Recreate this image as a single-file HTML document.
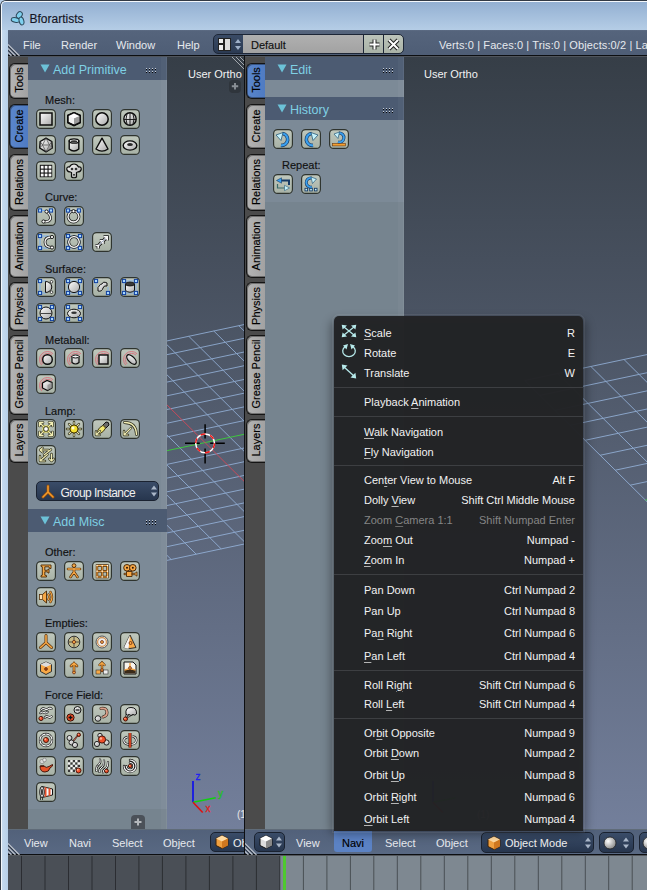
<!DOCTYPE html><html><head><meta charset="utf-8"><style>
*{margin:0;padding:0;box-sizing:border-box}
html,body{width:647px;height:890px;overflow:hidden;background:#b9d1ea;font-family:"Liberation Sans", sans-serif;position:relative}
.t{position:absolute;white-space:pre;line-height:1;font-family:"Liberation Sans", sans-serif}
.d{-webkit-text-stroke-width:0.15px}
div{position:absolute}
.ib{position:absolute;width:20px;height:20px;border-radius:4px;background:#b7c0b6;border:1px solid #30352f;box-shadow:0 1px 0 rgba(255,255,255,0.08)}
.ib svg{position:absolute;left:0;top:0}
.u{text-decoration:underline;text-underline-offset:1.8px;text-decoration-thickness:1px;text-decoration-color:color-mix(in srgb,currentColor 70%,transparent)}
</style></head><body><div style="left:0px;top:0px;width:647px;height:890px;background:#bcd4ec;border-top:1px solid #323a45;border-left:1px solid #323a45;border-top-left-radius:6px;"></div>
<div style="left:1px;top:1px;width:646px;height:889px;border-top:1px solid #f4f8fc;border-left:1px solid #f4f8fc;border-top-left-radius:5px;"></div>
<div style="left:2px;top:2px;width:645px;height:28px;background:linear-gradient(#93b0d2,#b5cde6);border-top-left-radius:4px;"></div>
<div style="left:2px;top:30px;width:6px;height:860px;background:linear-gradient(90deg,#c6daee,#b7cfe8);"></div>
<svg style="position:absolute;left:10px;top:10px;" width="16" height="16" viewBox="0 0 16 16"><g fill="#7fd0ee" stroke="#2a4658" stroke-width="1"><ellipse cx="9.3" cy="5" rx="2.6" ry="3.6" transform="rotate(35 9.3 5)"/><ellipse cx="5.5" cy="10" rx="4.3" ry="2.3" transform="rotate(10 5.5 10)"/><ellipse cx="11.5" cy="11" rx="2.3" ry="4" transform="rotate(-15 11.5 11)"/></g></svg>
<div class="t d" style="left:29.5px;top:12.54px;font-size:12px;color:#151525;">Bforartists</div>
<div style="left:8px;top:30px;width:639px;height:26px;background:linear-gradient(#5d6c84 0px,#55647c 1.5px,#4e5d75 100%);"></div>
<div style="left:8px;top:55px;width:639px;height:1px;background:#0c0e11;"></div>
<div style="left:8px;top:56px;width:639px;height:1px;background:#50555c;"></div>
<svg style="position:absolute;left:8px;top:43px;" width="13" height="13" viewBox="0 0 13 13"><path d="M0 1.5 L11.5 13 M0 5.5 L7.5 13 M0 9.5 L3.5 13" stroke="#d0d4da" stroke-width="1.2" opacity="0.85"/><path d="M0 3.2 L9.8 13 M0 7.2 L5.8 13 M0 11.2 L1.8 13" stroke="#1a1e24" stroke-width="0.9" opacity="0.8"/></svg>
<div class="t" style="left:23px;top:40.19px;font-size:11px;color:#e6e9ee;">File</div>
<div class="t" style="left:61px;top:40.19px;font-size:11px;color:#e6e9ee;">Render</div>
<div class="t" style="left:116px;top:40.19px;font-size:11px;color:#e6e9ee;">Window</div>
<div class="t" style="left:177px;top:40.19px;font-size:11px;color:#e6e9ee;">Help</div>
<div style="left:213px;top:34px;width:31px;height:20px;background:linear-gradient(#3a4b66,#2b3a52);border:1px solid #1d2636;border-radius:5px 0 0 5px;"></div>
<svg style="position:absolute;left:218px;top:38px;" width="13" height="13" viewBox="0 0 13 13"><rect x="0.5" y="0.5" width="5" height="5" fill="#eee" stroke="#222" stroke-width="1"/><rect x="0.5" y="6.5" width="5" height="6" fill="#eee" stroke="#222" stroke-width="1"/><rect x="6.5" y="0.5" width="6" height="12" fill="#ddd" stroke="#222" stroke-width="1"/></svg>
<svg style="position:absolute;left:234px;top:38px;" width="8" height="13" viewBox="0 0 8 13"><path d="M1 5 L4 1 L7 5Z M1 8 L4 12 L7 8Z" fill="#9fb0c8"/></svg>
<div style="left:243px;top:34px;width:121px;height:20px;background:linear-gradient(#b0b0b0,#a2a2a2);border:1px solid #1d2636;border-left:none;"></div>
<div class="t d" style="left:251px;top:39.89px;font-size:11px;color:#111;">Default</div>
<div style="left:363px;top:34px;width:21px;height:20px;background:linear-gradient(#bcc4ba,#a9b2a7);border:1px solid #1d2636;"></div>
<div style="left:383px;top:34px;width:21px;height:20px;background:linear-gradient(#bcc4ba,#a9b2a7);border:1px solid #1d2636;border-radius:0 5px 5px 0;"></div>
<svg style="position:absolute;left:368px;top:38px;" width="13" height="13" viewBox="0 0 13 13"><path d="M6.5 1.5 V11.5 M1.5 6.5 H11.5" stroke="#222" stroke-width="4"/><path d="M6.5 1.5 V11.5 M1.5 6.5 H11.5" stroke="#fff" stroke-width="2"/></svg>
<svg style="position:absolute;left:387px;top:38px;" width="13" height="13" viewBox="0 0 13 13"><path d="M2 2 L11 11 M11 2 L2 11" stroke="#222" stroke-width="4"/><path d="M2 2 L11 11 M11 2 L2 11" stroke="#fff" stroke-width="2"/></svg>
<div class="t" style="left:439px;top:40.19px;font-size:11px;color:#e6e9ee;letter-spacing:0.11px">Verts:0 | Faces:0 | Tris:0 | Objects:0/2 | Layers</div>
<div style="left:8px;top:57px;width:20px;height:772px;background:#4b4b4b;"></div>
<div style="left:245px;top:57px;width:20px;height:772px;background:#4b4b4b;"></div>
<div style="left:244px;top:56px;width:1px;height:773px;background:#0d0f12;"></div>
<div style="left:9px;top:63px;width:19px;height:36px;background:linear-gradient(90deg,#b4b4b4,#a2a2a2);border:1px solid #141414;border-right:none;border-radius:6px 0 0 6px;box-shadow:inset 1px 1px 0 rgba(0,0,0,0.35), inset 0 -1px 0 rgba(0,0,0,0.35);"></div>
<div class="t" style="left:10px;top:63px;width:18px;height:36px;"><div class="t d" style="left:50%;top:calc(50% - 0.8px);transform:translate(-50%,-50%) rotate(-90deg);font-size:11px;color:#000;">Tools</div></div>
<div style="left:9px;top:104px;width:19px;height:45px;background:linear-gradient(90deg,#5a86cc,#4f7bc2);border:1px solid #141414;border-right:none;border-radius:6px 0 0 6px;box-shadow:inset 1px 1px 0 rgba(0,0,0,0.35), inset 0 -1px 0 rgba(0,0,0,0.35);"></div>
<div class="t" style="left:10px;top:104px;width:18px;height:45px;"><div class="t d" style="left:50%;top:calc(50% - 0.8px);transform:translate(-50%,-50%) rotate(-90deg);font-size:11px;color:#000;">Create</div></div>
<div style="left:9px;top:154px;width:19px;height:57px;background:linear-gradient(90deg,#b4b4b4,#a2a2a2);border:1px solid #141414;border-right:none;border-radius:6px 0 0 6px;box-shadow:inset 1px 1px 0 rgba(0,0,0,0.35), inset 0 -1px 0 rgba(0,0,0,0.35);"></div>
<div class="t" style="left:10px;top:154px;width:18px;height:57px;"><div class="t d" style="left:50%;top:calc(50% - 0.8px);transform:translate(-50%,-50%) rotate(-90deg);font-size:11px;color:#000;">Relations</div></div>
<div style="left:9px;top:215px;width:19px;height:63px;background:linear-gradient(90deg,#b4b4b4,#a2a2a2);border:1px solid #141414;border-right:none;border-radius:6px 0 0 6px;box-shadow:inset 1px 1px 0 rgba(0,0,0,0.35), inset 0 -1px 0 rgba(0,0,0,0.35);"></div>
<div class="t" style="left:10px;top:215px;width:18px;height:63px;"><div class="t d" style="left:50%;top:calc(50% - 0.8px);transform:translate(-50%,-50%) rotate(-90deg);font-size:11px;color:#000;">Animation</div></div>
<div style="left:9px;top:282px;width:19px;height:49px;background:linear-gradient(90deg,#b4b4b4,#a2a2a2);border:1px solid #141414;border-right:none;border-radius:6px 0 0 6px;box-shadow:inset 1px 1px 0 rgba(0,0,0,0.35), inset 0 -1px 0 rgba(0,0,0,0.35);"></div>
<div class="t" style="left:10px;top:282px;width:18px;height:49px;"><div class="t d" style="left:50%;top:calc(50% - 0.8px);transform:translate(-50%,-50%) rotate(-90deg);font-size:11px;color:#000;">Physics</div></div>
<div style="left:9px;top:335px;width:19px;height:80px;background:linear-gradient(90deg,#b4b4b4,#a2a2a2);border:1px solid #141414;border-right:none;border-radius:6px 0 0 6px;box-shadow:inset 1px 1px 0 rgba(0,0,0,0.35), inset 0 -1px 0 rgba(0,0,0,0.35);"></div>
<div class="t" style="left:10px;top:335px;width:18px;height:80px;"><div class="t d" style="left:50%;top:calc(50% - 0.8px);transform:translate(-50%,-50%) rotate(-90deg);font-size:11px;color:#000;">Grease Pencil</div></div>
<div style="left:9px;top:419px;width:19px;height:44px;background:linear-gradient(90deg,#b4b4b4,#a2a2a2);border:1px solid #141414;border-right:none;border-radius:6px 0 0 6px;box-shadow:inset 1px 1px 0 rgba(0,0,0,0.35), inset 0 -1px 0 rgba(0,0,0,0.35);"></div>
<div class="t" style="left:10px;top:419px;width:18px;height:44px;"><div class="t d" style="left:50%;top:calc(50% - 0.8px);transform:translate(-50%,-50%) rotate(-90deg);font-size:11px;color:#000;">Layers</div></div>
<div style="left:246px;top:63px;width:19px;height:36px;background:linear-gradient(90deg,#5a86cc,#4f7bc2);border:1px solid #141414;border-right:none;border-radius:6px 0 0 6px;box-shadow:inset 1px 1px 0 rgba(0,0,0,0.35), inset 0 -1px 0 rgba(0,0,0,0.35);"></div>
<div class="t" style="left:247px;top:63px;width:18px;height:36px;"><div class="t d" style="left:50%;top:calc(50% - 0.8px);transform:translate(-50%,-50%) rotate(-90deg);font-size:11px;color:#000;">Tools</div></div>
<div style="left:246px;top:104px;width:19px;height:45px;background:linear-gradient(90deg,#b4b4b4,#a2a2a2);border:1px solid #141414;border-right:none;border-radius:6px 0 0 6px;box-shadow:inset 1px 1px 0 rgba(0,0,0,0.35), inset 0 -1px 0 rgba(0,0,0,0.35);"></div>
<div class="t" style="left:247px;top:104px;width:18px;height:45px;"><div class="t d" style="left:50%;top:calc(50% - 0.8px);transform:translate(-50%,-50%) rotate(-90deg);font-size:11px;color:#000;">Create</div></div>
<div style="left:246px;top:154px;width:19px;height:57px;background:linear-gradient(90deg,#b4b4b4,#a2a2a2);border:1px solid #141414;border-right:none;border-radius:6px 0 0 6px;box-shadow:inset 1px 1px 0 rgba(0,0,0,0.35), inset 0 -1px 0 rgba(0,0,0,0.35);"></div>
<div class="t" style="left:247px;top:154px;width:18px;height:57px;"><div class="t d" style="left:50%;top:calc(50% - 0.8px);transform:translate(-50%,-50%) rotate(-90deg);font-size:11px;color:#000;">Relations</div></div>
<div style="left:246px;top:215px;width:19px;height:63px;background:linear-gradient(90deg,#b4b4b4,#a2a2a2);border:1px solid #141414;border-right:none;border-radius:6px 0 0 6px;box-shadow:inset 1px 1px 0 rgba(0,0,0,0.35), inset 0 -1px 0 rgba(0,0,0,0.35);"></div>
<div class="t" style="left:247px;top:215px;width:18px;height:63px;"><div class="t d" style="left:50%;top:calc(50% - 0.8px);transform:translate(-50%,-50%) rotate(-90deg);font-size:11px;color:#000;">Animation</div></div>
<div style="left:246px;top:282px;width:19px;height:49px;background:linear-gradient(90deg,#b4b4b4,#a2a2a2);border:1px solid #141414;border-right:none;border-radius:6px 0 0 6px;box-shadow:inset 1px 1px 0 rgba(0,0,0,0.35), inset 0 -1px 0 rgba(0,0,0,0.35);"></div>
<div class="t" style="left:247px;top:282px;width:18px;height:49px;"><div class="t d" style="left:50%;top:calc(50% - 0.8px);transform:translate(-50%,-50%) rotate(-90deg);font-size:11px;color:#000;">Physics</div></div>
<div style="left:246px;top:335px;width:19px;height:80px;background:linear-gradient(90deg,#b4b4b4,#a2a2a2);border:1px solid #141414;border-right:none;border-radius:6px 0 0 6px;box-shadow:inset 1px 1px 0 rgba(0,0,0,0.35), inset 0 -1px 0 rgba(0,0,0,0.35);"></div>
<div class="t" style="left:247px;top:335px;width:18px;height:80px;"><div class="t d" style="left:50%;top:calc(50% - 0.8px);transform:translate(-50%,-50%) rotate(-90deg);font-size:11px;color:#000;">Grease Pencil</div></div>
<div style="left:246px;top:419px;width:19px;height:44px;background:linear-gradient(90deg,#b4b4b4,#a2a2a2);border:1px solid #141414;border-right:none;border-radius:6px 0 0 6px;box-shadow:inset 1px 1px 0 rgba(0,0,0,0.35), inset 0 -1px 0 rgba(0,0,0,0.35);"></div>
<div class="t" style="left:247px;top:419px;width:18px;height:44px;"><div class="t d" style="left:50%;top:calc(50% - 0.8px);transform:translate(-50%,-50%) rotate(-90deg);font-size:11px;color:#000;">Layers</div></div>
<div style="left:28px;top:57px;width:139px;height:772px;background:#76848f;"></div>
<div style="left:265px;top:57px;width:139px;height:772px;background:#76848f;"></div>
<div style="left:28px;top:57px;width:139px;height:23px;background:#4c5b72;"></div>
<svg style="position:absolute;left:40px;top:64px;" width="10" height="9" viewBox="0 0 10 9"><path d="M0.5 0.5 H9.5 L5 8.5Z" fill="#6cc2d8"/></svg>
<div class="t" style="left:53px;top:64.12px;font-size:12.5px;color:#7fd0e4;">Add Primitive</div>
<svg style="position:absolute;left:146px;top:68px;" width="11" height="5" viewBox="0 0 11 5"><rect x="0" y="0" width="1" height="1" fill="#c4ccd8"/><rect x="0" y="1" width="1" height="1" fill="#050608"/><rect x="0" y="3" width="1" height="1" fill="#c4ccd8"/><rect x="0" y="4" width="1" height="1" fill="#050608"/><rect x="3" y="0" width="1" height="1" fill="#c4ccd8"/><rect x="3" y="1" width="1" height="1" fill="#050608"/><rect x="3" y="3" width="1" height="1" fill="#c4ccd8"/><rect x="3" y="4" width="1" height="1" fill="#050608"/><rect x="6" y="0" width="1" height="1" fill="#c4ccd8"/><rect x="6" y="1" width="1" height="1" fill="#050608"/><rect x="6" y="3" width="1" height="1" fill="#c4ccd8"/><rect x="6" y="4" width="1" height="1" fill="#050608"/><rect x="9" y="0" width="1" height="1" fill="#c4ccd8"/><rect x="9" y="1" width="1" height="1" fill="#050608"/><rect x="9" y="3" width="1" height="1" fill="#c4ccd8"/><rect x="9" y="4" width="1" height="1" fill="#050608"/></svg>
<div style="left:28px;top:80px;width:139px;height:729px;background:#7c8a97;"></div>
<div style="left:265px;top:57px;width:139px;height:23px;background:#4c5b72;"></div>
<svg style="position:absolute;left:277px;top:64px;" width="10" height="9" viewBox="0 0 10 9"><path d="M0.5 0.5 H9.5 L5 8.5Z" fill="#6cc2d8"/></svg>
<div class="t" style="left:290px;top:64.12px;font-size:12.5px;color:#7fd0e4;">Edit</div>
<svg style="position:absolute;left:383px;top:68px;" width="11" height="5" viewBox="0 0 11 5"><rect x="0" y="0" width="1" height="1" fill="#c4ccd8"/><rect x="0" y="1" width="1" height="1" fill="#050608"/><rect x="0" y="3" width="1" height="1" fill="#c4ccd8"/><rect x="0" y="4" width="1" height="1" fill="#050608"/><rect x="3" y="0" width="1" height="1" fill="#c4ccd8"/><rect x="3" y="1" width="1" height="1" fill="#050608"/><rect x="3" y="3" width="1" height="1" fill="#c4ccd8"/><rect x="3" y="4" width="1" height="1" fill="#050608"/><rect x="6" y="0" width="1" height="1" fill="#c4ccd8"/><rect x="6" y="1" width="1" height="1" fill="#050608"/><rect x="6" y="3" width="1" height="1" fill="#c4ccd8"/><rect x="6" y="4" width="1" height="1" fill="#050608"/><rect x="9" y="0" width="1" height="1" fill="#c4ccd8"/><rect x="9" y="1" width="1" height="1" fill="#050608"/><rect x="9" y="3" width="1" height="1" fill="#c4ccd8"/><rect x="9" y="4" width="1" height="1" fill="#050608"/></svg>
<div style="left:265px;top:80px;width:139px;height:17px;background:#7c8a97;"></div>
<div style="left:265px;top:97px;width:139px;height:23px;background:#4c5b72;"></div>
<svg style="position:absolute;left:277px;top:104px;" width="10" height="9" viewBox="0 0 10 9"><path d="M0.5 0.5 H9.5 L5 8.5Z" fill="#6cc2d8"/></svg>
<div class="t" style="left:290px;top:104.12px;font-size:12.5px;color:#7fd0e4;">History</div>
<svg style="position:absolute;left:383px;top:108px;" width="11" height="5" viewBox="0 0 11 5"><rect x="0" y="0" width="1" height="1" fill="#c4ccd8"/><rect x="0" y="1" width="1" height="1" fill="#050608"/><rect x="0" y="3" width="1" height="1" fill="#c4ccd8"/><rect x="0" y="4" width="1" height="1" fill="#050608"/><rect x="3" y="0" width="1" height="1" fill="#c4ccd8"/><rect x="3" y="1" width="1" height="1" fill="#050608"/><rect x="3" y="3" width="1" height="1" fill="#c4ccd8"/><rect x="3" y="4" width="1" height="1" fill="#050608"/><rect x="6" y="0" width="1" height="1" fill="#c4ccd8"/><rect x="6" y="1" width="1" height="1" fill="#050608"/><rect x="6" y="3" width="1" height="1" fill="#c4ccd8"/><rect x="6" y="4" width="1" height="1" fill="#050608"/><rect x="9" y="0" width="1" height="1" fill="#c4ccd8"/><rect x="9" y="1" width="1" height="1" fill="#050608"/><rect x="9" y="3" width="1" height="1" fill="#c4ccd8"/><rect x="9" y="4" width="1" height="1" fill="#050608"/></svg>
<div style="left:265px;top:120px;width:139px;height:82px;background:#7c8a97;"></div>
<div style="left:161px;top:57px;width:6px;height:772px;background:rgba(255,255,255,0.03);"></div>
<div style="left:166px;top:57px;width:1px;height:772px;background:rgba(255,255,255,0.06);"></div>
<div style="left:398px;top:57px;width:6px;height:772px;background:rgba(255,255,255,0.03);"></div>
<div style="left:403px;top:57px;width:1px;height:772px;background:rgba(255,255,255,0.06);"></div>
<div style="left:167px;top:57px;width:77px;height:772px;background:linear-gradient(#363e47,#737f9b);"></div>
<div style="left:404px;top:57px;width:243px;height:772px;background:linear-gradient(#363e47,#737f9b);"></div>
<div class="t" style="left:188px;top:69.39px;font-size:11px;color:#f2f2f2;">User Ortho</div>
<div class="t" style="left:424px;top:69.39px;font-size:11px;color:#f2f2f2;">User Ortho</div>
<div style="left:8px;top:829px;width:639px;height:26px;background:linear-gradient(#5f6b78 0px,#5f6b78 1px,#52617a 1px,#596983 100%);"></div>
<div style="left:244px;top:829px;width:1px;height:26px;background:#0d0f12;"></div>
<div style="left:8px;top:854px;width:639px;height:1px;background:#0c0e11;"></div>
<div style="left:8px;top:855px;width:639px;height:1px;background:#54585d;"></div>
<svg style="position:absolute;left:8px;top:842px;" width="13" height="13" viewBox="0 0 13 13"><path d="M0 1.5 L11.5 13 M0 5.5 L7.5 13 M0 9.5 L3.5 13" stroke="#d0d4da" stroke-width="1.2" opacity="0.85"/><path d="M0 3.2 L9.8 13 M0 7.2 L5.8 13 M0 11.2 L1.8 13" stroke="#1a1e24" stroke-width="0.9" opacity="0.8"/></svg>
<svg style="position:absolute;left:245px;top:842px;" width="13" height="13" viewBox="0 0 13 13"><path d="M0 1.5 L11.5 13 M0 5.5 L7.5 13 M0 9.5 L3.5 13" stroke="#d0d4da" stroke-width="1.2" opacity="0.85"/><path d="M0 3.2 L9.8 13 M0 7.2 L5.8 13 M0 11.2 L1.8 13" stroke="#1a1e24" stroke-width="0.9" opacity="0.8"/></svg>
<div class="t" style="left:24px;top:837.99px;font-size:11px;color:#e6e9ee;">View</div>
<div class="t" style="left:69px;top:837.99px;font-size:11px;color:#e6e9ee;">Navi</div>
<div class="t" style="left:112px;top:837.99px;font-size:11px;color:#e6e9ee;">Select</div>
<div class="t" style="left:163px;top:837.99px;font-size:11px;color:#e6e9ee;">Object</div>
<div class="t" style="left:296px;top:837.99px;font-size:11px;color:#e6e9ee;">View</div>
<div class="t" style="left:385px;top:837.99px;font-size:11px;color:#e6e9ee;">Select</div>
<div class="t" style="left:436px;top:837.99px;font-size:11px;color:#e6e9ee;">Object</div>
<div style="left:334px;top:831px;width:38px;height:21px;background:#5b82c4;border-radius:0 0 3px 3px;"></div>
<div class="t d" style="left:342px;top:837.99px;font-size:11px;color:#000;">Navi</div>
<div style="left:8px;top:856px;width:639px;height:34px;background:#7e8891;"></div>
<div style="left:8px;top:856px;width:272px;height:34px;background:#4a4f56;"></div>
<svg style="position:absolute;left:8px;top:856px;" width="639" height="34" viewBox="0 0 639 34"><rect x="13.0" y="0" width="1" height="34" fill="#000" opacity="0.42"/><rect x="36.5" y="0" width="1" height="34" fill="#000" opacity="0.42"/><rect x="60.0" y="0" width="1" height="34" fill="#000" opacity="0.42"/><rect x="83.5" y="0" width="1" height="34" fill="#000" opacity="0.42"/><rect x="107.0" y="0" width="1" height="34" fill="#000" opacity="0.42"/><rect x="130.4" y="0" width="1" height="34" fill="#000" opacity="0.42"/><rect x="153.9" y="0" width="1" height="34" fill="#000" opacity="0.42"/><rect x="177.4" y="0" width="1" height="34" fill="#000" opacity="0.42"/><rect x="200.9" y="0" width="1" height="34" fill="#000" opacity="0.42"/><rect x="224.4" y="0" width="1" height="34" fill="#000" opacity="0.42"/><rect x="247.9" y="0" width="1" height="34" fill="#000" opacity="0.42"/><rect x="271.4" y="0" width="1" height="34" fill="#000" opacity="0.42"/><rect x="294.9" y="0" width="1" height="34" fill="#000" opacity="0.42"/><rect x="318.4" y="0" width="1" height="34" fill="#000" opacity="0.42"/><rect x="341.9" y="0" width="1" height="34" fill="#000" opacity="0.42"/><rect x="365.3" y="0" width="1" height="34" fill="#000" opacity="0.42"/><rect x="388.8" y="0" width="1" height="34" fill="#000" opacity="0.42"/><rect x="412.3" y="0" width="1" height="34" fill="#000" opacity="0.42"/><rect x="435.8" y="0" width="1" height="34" fill="#000" opacity="0.42"/><rect x="459.3" y="0" width="1" height="34" fill="#000" opacity="0.42"/><rect x="482.8" y="0" width="1" height="34" fill="#000" opacity="0.42"/><rect x="506.3" y="0" width="1" height="34" fill="#000" opacity="0.42"/><rect x="529.8" y="0" width="1" height="34" fill="#000" opacity="0.42"/><rect x="553.3" y="0" width="1" height="34" fill="#000" opacity="0.42"/><rect x="576.8" y="0" width="1" height="34" fill="#000" opacity="0.42"/><rect x="600.2" y="0" width="1" height="34" fill="#000" opacity="0.42"/><rect x="623.7" y="0" width="1" height="34" fill="#000" opacity="0.42"/><rect x="647.2" y="0" width="1" height="34" fill="#000" opacity="0.42"/></svg>
<div style="left:283px;top:856px;width:3px;height:34px;background:#4ec92f;"></div>
<svg width="0" height="0" style="position:absolute"><defs><linearGradient id="gw" x1="0" y1="0" x2="1" y2="1"><stop offset="0" stop-color="#ffffff"/><stop offset="1" stop-color="#a8a8a8"/></linearGradient><linearGradient id="bg" x1="0" y1="0" x2="0" y2="1"><stop offset="0" stop-color="#c0c8bd"/><stop offset="1" stop-color="#a8b2a6"/></linearGradient></defs></svg>
<div class="t d" style="left:45px;top:95.39px;font-size:11px;color:#111;">Mesh:</div>
<svg style="position:absolute;left:36px;top:109px" width="20" height="20" viewBox="0 0 20 20"><rect x="0.6" y="0.6" width="18.8" height="18.8" rx="4" fill="url(#bg)" stroke="#2e332e" stroke-width="1.15"/><rect x="4" y="4" width="12" height="12" fill="url(#gw)" stroke="#0c0c0c" stroke-width="1.5"/></svg>
<svg style="position:absolute;left:64px;top:109px" width="20" height="20" viewBox="0 0 20 20"><rect x="0.6" y="0.6" width="18.8" height="18.8" rx="4" fill="url(#bg)" stroke="#2e332e" stroke-width="1.15"/><path d="M3.8 6.5 L10 3.6 L16.2 6.5 V13.5 L10 16.5 L3.8 13.5Z" fill="#f2f2f2" stroke="#0c0c0c" stroke-width="1.4" stroke-linejoin="round"/><path d="M10 9.2 L16.2 6.5 V13.5 L10 16.5Z" fill="#9a9a9a"/><path d="M3.8 6.5 L10 9.2 L16.2 6.5 L10 3.6Z" fill="#ffffff"/><path d="M3.8 6.5 L10 3.6 L16.2 6.5 V13.5 L10 16.5 L3.8 13.5Z" fill="none" stroke="#0c0c0c" stroke-width="1.4" stroke-linejoin="round"/></svg>
<svg style="position:absolute;left:92px;top:109px" width="20" height="20" viewBox="0 0 20 20"><rect x="0.6" y="0.6" width="18.8" height="18.8" rx="4" fill="url(#bg)" stroke="#2e332e" stroke-width="1.15"/><circle cx="10" cy="10" r="6.2" fill="url(#gw)" stroke="#0c0c0c" stroke-width="1.5"/></svg>
<svg style="position:absolute;left:120px;top:109px" width="20" height="20" viewBox="0 0 20 20"><rect x="0.6" y="0.6" width="18.8" height="18.8" rx="4" fill="url(#bg)" stroke="#2e332e" stroke-width="1.15"/><circle cx="10" cy="10" r="6.2" fill="url(#gw)" stroke="#0c0c0c" stroke-width="1.4"/><path d="M4 10.5 H16 M10 4 V16 M7 5 Q5 10 7 15.2 M13 5 Q15 10 13 15.2" stroke="#111" stroke-width="0.9" fill="none"/></svg>
<svg style="position:absolute;left:36px;top:135px" width="20" height="20" viewBox="0 0 20 20"><rect x="0.6" y="0.6" width="18.8" height="18.8" rx="4" fill="url(#bg)" stroke="#2e332e" stroke-width="1.15"/><path d="M10 3.2 L15.8 6.5 L16.3 13 L10 16.8 L3.7 13 L4.2 6.5Z" fill="url(#gw)" stroke="#0c0c0c" stroke-width="1.4" stroke-linejoin="round"/><path d="M10 3.2 L6.5 10 L13.5 10Z M6.5 10 L10 16.8 L13.5 10 M4.2 6.5 L6.5 10 L3.7 13 M15.8 6.5 L13.5 10 L16.3 13" stroke="#444" stroke-width="0.7" fill="none"/><path d="M13.5 10 L16.3 13 L10 16.8Z" fill="#888" opacity="0.6"/></svg>
<svg style="position:absolute;left:64px;top:135px" width="20" height="20" viewBox="0 0 20 20"><rect x="0.6" y="0.6" width="18.8" height="18.8" rx="4" fill="url(#bg)" stroke="#2e332e" stroke-width="1.15"/><path d="M5.2 6 V14 Q10 18 14.8 14 V6Z" fill="url(#gw)" stroke="#0c0c0c" stroke-width="1.4"/><ellipse cx="10" cy="6" rx="4.8" ry="2.2" fill="#f4f4f4" stroke="#0c0c0c" stroke-width="1.3"/><ellipse cx="10" cy="6.4" rx="3.2" ry="1.2" fill="#333"/></svg>
<svg style="position:absolute;left:92px;top:135px" width="20" height="20" viewBox="0 0 20 20"><rect x="0.6" y="0.6" width="18.8" height="18.8" rx="4" fill="url(#bg)" stroke="#2e332e" stroke-width="1.15"/><path d="M10 3.2 L16 14 Q10 18.2 4 14Z" fill="url(#gw)" stroke="#0c0c0c" stroke-width="1.4" stroke-linejoin="round"/></svg>
<svg style="position:absolute;left:120px;top:135px" width="20" height="20" viewBox="0 0 20 20"><rect x="0.6" y="0.6" width="18.8" height="18.8" rx="4" fill="url(#bg)" stroke="#2e332e" stroke-width="1.15"/><ellipse cx="10" cy="10.5" rx="6.8" ry="4.6" fill="url(#gw)" stroke="#0c0c0c" stroke-width="1.4"/><ellipse cx="10" cy="9.6" rx="2.9" ry="1.5" fill="#2a2a2a"/></svg>
<svg style="position:absolute;left:36px;top:161px" width="20" height="20" viewBox="0 0 20 20"><rect x="0.6" y="0.6" width="18.8" height="18.8" rx="4" fill="url(#bg)" stroke="#2e332e" stroke-width="1.15"/><rect x="3.8" y="3.8" width="12.4" height="12.4" fill="#111"/><rect x="4.8" y="4.8" width="2.8" height="2.8" fill="#fafafa"/><rect x="4.8" y="8.7" width="2.8" height="2.8" fill="#fafafa"/><rect x="4.8" y="12.6" width="2.8" height="2.8" fill="#fafafa"/><rect x="8.7" y="4.8" width="2.8" height="2.8" fill="#fafafa"/><rect x="8.7" y="8.7" width="2.8" height="2.8" fill="#fafafa"/><rect x="8.7" y="12.6" width="2.8" height="2.8" fill="#fafafa"/><rect x="12.6" y="4.8" width="2.8" height="2.8" fill="#fafafa"/><rect x="12.6" y="8.7" width="2.8" height="2.8" fill="#fafafa"/><rect x="12.6" y="12.6" width="2.8" height="2.8" fill="#fafafa"/></svg>
<svg style="position:absolute;left:64px;top:161px" width="20" height="20" viewBox="0 0 20 20"><rect x="0.6" y="0.6" width="18.8" height="18.8" rx="4" fill="url(#bg)" stroke="#2e332e" stroke-width="1.15"/><path d="M2.8 8.5 Q2.5 5.5 5.5 6 Q7 3 10 3 Q13 3 14.5 6 Q17.5 5.5 17.2 8.5 Q16.5 11 13.5 11 L12.5 11.5 V16 Q10 17.5 7.5 16 V11.5 L6.5 11 Q3.5 11 2.8 8.5Z" fill="url(#gw)" stroke="#0c0c0c" stroke-width="1.2"/><circle cx="8" cy="8" r="1.3" fill="#333"/><circle cx="12" cy="8" r="1.3" fill="#333"/><rect x="9.2" y="13" width="1.6" height="1.6" fill="#222"/></svg>
<div class="t d" style="left:45px;top:192.39px;font-size:11px;color:#111;">Curve:</div>
<svg style="position:absolute;left:36px;top:206px" width="20" height="20" viewBox="0 0 20 20"><rect x="0.6" y="0.6" width="18.8" height="18.8" rx="4" fill="url(#bg)" stroke="#2e332e" stroke-width="1.15"/><path d="M4 4.5 H15" stroke="#7ab0f0" stroke-width="1"/><path d="M10.5 5.5 Q15 9 14.5 13 Q13 16.5 7.5 15.5" stroke="#1a1a1a" stroke-width="2.8" fill="none" stroke-linecap="round"/><path d="M10.5 5.5 Q15 9 14.5 13 Q13 16.5 7.5 15.5" stroke="#f4f4f4" stroke-width="1.3" fill="none" stroke-linecap="round"/><rect x="2.4" y="2.9" width="3.2" height="3.2" fill="#a8d8ff" stroke="#1040a0" stroke-width="1"/><rect x="13.4" y="2.9" width="3.2" height="3.2" fill="#a8d8ff" stroke="#1040a0" stroke-width="1"/><circle cx="10.5" cy="5.5" r="1.6" fill="#fff" stroke="#111" stroke-width="0.9"/><circle cx="7.5" cy="15.5" r="1.6" fill="#fff" stroke="#111" stroke-width="0.9"/></svg>
<svg style="position:absolute;left:64px;top:206px" width="20" height="20" viewBox="0 0 20 20"><rect x="0.6" y="0.6" width="18.8" height="18.8" rx="4" fill="url(#bg)" stroke="#2e332e" stroke-width="1.15"/><path d="M4 4.5 H15" stroke="#7ab0f0" stroke-width="1"/><path d="M9.5 5.2 A5.4 5.4 0 1 1 9.49 5.2" stroke="#1a1a1a" stroke-width="2.8" fill="none" stroke-linecap="round"/><path d="M9.5 5.2 A5.4 5.4 0 1 1 9.49 5.2" stroke="#f4f4f4" stroke-width="1.3" fill="none" stroke-linecap="round"/><rect x="2.4" y="2.9" width="3.2" height="3.2" fill="#a8d8ff" stroke="#1040a0" stroke-width="1"/><rect x="13.4" y="2.9" width="3.2" height="3.2" fill="#a8d8ff" stroke="#1040a0" stroke-width="1"/><circle cx="9.5" cy="5.2" r="1.6" fill="#fff" stroke="#111" stroke-width="0.9"/></svg>
<svg style="position:absolute;left:36px;top:232px" width="20" height="20" viewBox="0 0 20 20"><rect x="0.6" y="0.6" width="18.8" height="18.8" rx="4" fill="url(#bg)" stroke="#2e332e" stroke-width="1.15"/><path d="M13 4 H4 V16 H13" stroke="#7ab0f0" stroke-width="1" fill="none"/><path d="M16 5 Q9 5 9 10 Q9 15.5 16 15.5" stroke="#1a1a1a" stroke-width="2.8" fill="none" stroke-linecap="round"/><path d="M16 5 Q9 5 9 10 Q9 15.5 16 15.5" stroke="#f4f4f4" stroke-width="1.3" fill="none" stroke-linecap="round"/><rect x="2.4" y="2.4" width="3.2" height="3.2" fill="#a8d8ff" stroke="#1040a0" stroke-width="1"/><rect x="2.4" y="14.4" width="3.2" height="3.2" fill="#a8d8ff" stroke="#1040a0" stroke-width="1"/><circle cx="16" cy="5" r="1.6" fill="#fff" stroke="#111" stroke-width="0.9"/><circle cx="16" cy="15.5" r="1.6" fill="#fff" stroke="#111" stroke-width="0.9"/></svg>
<svg style="position:absolute;left:64px;top:232px" width="20" height="20" viewBox="0 0 20 20"><rect x="0.6" y="0.6" width="18.8" height="18.8" rx="4" fill="url(#bg)" stroke="#2e332e" stroke-width="1.15"/><rect x="4" y="4" width="12" height="12" fill="none" stroke="#7ab0f0" stroke-width="0.8"/><path d="M10 4.7 A5.3 5.3 0 1 1 9.99 4.7" stroke="#1a1a1a" stroke-width="2.8" fill="none" stroke-linecap="round"/><path d="M10 4.7 A5.3 5.3 0 1 1 9.99 4.7" stroke="#f4f4f4" stroke-width="1.3" fill="none" stroke-linecap="round"/><rect x="2.4" y="2.4" width="3.2" height="3.2" fill="#a8d8ff" stroke="#1040a0" stroke-width="1"/><rect x="14.4" y="2.4" width="3.2" height="3.2" fill="#a8d8ff" stroke="#1040a0" stroke-width="1"/><rect x="2.4" y="14.4" width="3.2" height="3.2" fill="#a8d8ff" stroke="#1040a0" stroke-width="1"/><rect x="14.4" y="14.4" width="3.2" height="3.2" fill="#a8d8ff" stroke="#1040a0" stroke-width="1"/></svg>
<svg style="position:absolute;left:92px;top:232px" width="20" height="20" viewBox="0 0 20 20"><rect x="0.6" y="0.6" width="18.8" height="18.8" rx="4" fill="url(#bg)" stroke="#2e332e" stroke-width="1.15"/><path d="M5.5 14.5 L15 5 M11.5 4.8 H15.2 V8.5 M7.8 8.8 H11 V12 M3.5 13.5 H6.2 V16.5" stroke="#141414" stroke-width="3.2" fill="none" stroke-linejoin="miter"/><path d="M5.5 14.5 L15 5 M11.5 4.8 H15.2 V8.5 M7.8 8.8 H11 V12 M3.5 13.5 H6.2 V16.5" stroke="#f8f8f8" stroke-width="1.6" fill="none" stroke-linejoin="miter"/><path d="M7 13 L13.5 6.5" stroke="#8a9ab8" stroke-width="0.8"/></svg>
<div class="t d" style="left:45px;top:263.89px;font-size:11px;color:#111;">Surface:</div>
<svg style="position:absolute;left:36px;top:277px" width="20" height="20" viewBox="0 0 20 20"><rect x="0.6" y="0.6" width="18.8" height="18.8" rx="4" fill="url(#bg)" stroke="#2e332e" stroke-width="1.15"/><path d="M10 4 H4 V16 H10" stroke="#7ab0f0" stroke-width="1" fill="none"/><path d="M9.5 4.5 A6.3 5.5 0 0 1 9.5 15.5Z" fill="url(#gw)" stroke="#111" stroke-width="1"/><circle cx="15.5" cy="4.8" r="1.3" fill="#fff" stroke="#111" stroke-width="0.7"/><circle cx="15.5" cy="15.2" r="1.3" fill="#fff" stroke="#111" stroke-width="0.7"/><rect x="2.4" y="2.4" width="3.2" height="3.2" fill="#a8d8ff" stroke="#1040a0" stroke-width="1"/><rect x="2.4" y="14.4" width="3.2" height="3.2" fill="#a8d8ff" stroke="#1040a0" stroke-width="1"/></svg>
<svg style="position:absolute;left:64px;top:277px" width="20" height="20" viewBox="0 0 20 20"><rect x="0.6" y="0.6" width="18.8" height="18.8" rx="4" fill="url(#bg)" stroke="#2e332e" stroke-width="1.15"/><rect x="4" y="4" width="12" height="12" fill="none" stroke="#7ab0f0" stroke-width="0.8"/><circle cx="10" cy="10" r="5.6" fill="url(#gw)" stroke="#111" stroke-width="1"/><rect x="2.4" y="2.4" width="3.2" height="3.2" fill="#a8d8ff" stroke="#1040a0" stroke-width="1"/><rect x="14.4" y="2.4" width="3.2" height="3.2" fill="#a8d8ff" stroke="#1040a0" stroke-width="1"/><rect x="2.4" y="14.4" width="3.2" height="3.2" fill="#a8d8ff" stroke="#1040a0" stroke-width="1"/><rect x="14.4" y="14.4" width="3.2" height="3.2" fill="#a8d8ff" stroke="#1040a0" stroke-width="1"/></svg>
<svg style="position:absolute;left:92px;top:277px" width="20" height="20" viewBox="0 0 20 20"><rect x="0.6" y="0.6" width="18.8" height="18.8" rx="4" fill="url(#bg)" stroke="#2e332e" stroke-width="1.15"/><path d="M4 4 V10 M16 16 V10" stroke="#7ab0f0" stroke-width="0.8"/><path d="M6 10.5 Q9 6 10 7 Q11 4 15 6 L15 9 Q12 8 11 11 Q10 15 6 14Z" fill="url(#gw)" stroke="#111" stroke-width="1"/><rect x="2.4" y="2.4" width="3.2" height="3.2" fill="#a8d8ff" stroke="#1040a0" stroke-width="1"/><rect x="14.4" y="14.4" width="3.2" height="3.2" fill="#a8d8ff" stroke="#1040a0" stroke-width="1"/></svg>
<svg style="position:absolute;left:120px;top:277px" width="20" height="20" viewBox="0 0 20 20"><rect x="0.6" y="0.6" width="18.8" height="18.8" rx="4" fill="url(#bg)" stroke="#2e332e" stroke-width="1.15"/><rect x="4" y="4" width="12" height="12" fill="none" stroke="#7ab0f0" stroke-width="0.8"/><path d="M5.5 7 V13.5 Q10 17 14.5 13.5 V7Z" fill="url(#gw)" stroke="#111" stroke-width="1"/><ellipse cx="10" cy="7" rx="4.5" ry="2" fill="#3a3a3a" stroke="#111" stroke-width="0.8"/><rect x="2.4" y="2.4" width="3.2" height="3.2" fill="#a8d8ff" stroke="#1040a0" stroke-width="1"/><rect x="14.4" y="2.4" width="3.2" height="3.2" fill="#a8d8ff" stroke="#1040a0" stroke-width="1"/><rect x="2.4" y="14.4" width="3.2" height="3.2" fill="#a8d8ff" stroke="#1040a0" stroke-width="1"/><rect x="14.4" y="14.4" width="3.2" height="3.2" fill="#a8d8ff" stroke="#1040a0" stroke-width="1"/></svg>
<svg style="position:absolute;left:36px;top:303px" width="20" height="20" viewBox="0 0 20 20"><rect x="0.6" y="0.6" width="18.8" height="18.8" rx="4" fill="url(#bg)" stroke="#2e332e" stroke-width="1.15"/><circle cx="10" cy="10" r="6" fill="url(#gw)" stroke="#111" stroke-width="1"/><path d="M4.5 10.5 H15.5" stroke="#333" stroke-width="0.9"/><rect x="2.4" y="2.4" width="3.2" height="3.2" fill="#a8d8ff" stroke="#1040a0" stroke-width="1"/><rect x="14.4" y="2.4" width="3.2" height="3.2" fill="#a8d8ff" stroke="#1040a0" stroke-width="1"/><rect x="2.4" y="14.4" width="3.2" height="3.2" fill="#a8d8ff" stroke="#1040a0" stroke-width="1"/><rect x="14.4" y="14.4" width="3.2" height="3.2" fill="#a8d8ff" stroke="#1040a0" stroke-width="1"/></svg>
<svg style="position:absolute;left:64px;top:303px" width="20" height="20" viewBox="0 0 20 20"><rect x="0.6" y="0.6" width="18.8" height="18.8" rx="4" fill="url(#bg)" stroke="#2e332e" stroke-width="1.15"/><ellipse cx="10" cy="10.5" rx="6.5" ry="4.3" fill="url(#gw)" stroke="#111" stroke-width="1"/><ellipse cx="10" cy="9.8" rx="2.8" ry="1.3" fill="#333"/><rect x="2.4" y="2.4" width="3.2" height="3.2" fill="#a8d8ff" stroke="#1040a0" stroke-width="1"/><rect x="14.4" y="2.4" width="3.2" height="3.2" fill="#a8d8ff" stroke="#1040a0" stroke-width="1"/><rect x="2.4" y="14.4" width="3.2" height="3.2" fill="#a8d8ff" stroke="#1040a0" stroke-width="1"/><rect x="14.4" y="14.4" width="3.2" height="3.2" fill="#a8d8ff" stroke="#1040a0" stroke-width="1"/></svg>
<div class="t d" style="left:45px;top:334.89px;font-size:11px;color:#111;">Metaball:</div>
<svg style="position:absolute;left:36px;top:348px" width="20" height="20" viewBox="0 0 20 20"><rect x="0.6" y="0.6" width="18.8" height="18.8" rx="4" fill="url(#bg)" stroke="#2e332e" stroke-width="1.15"/><path d="M5.84 17.16 A8 8 0 0 1 17.16 5.84" stroke="#d8707e" stroke-width="0.9" fill="none"/><path d="M7.05 15.95 A6.3 6.3 0 0 1 15.95 7.05" stroke="#d8707e" stroke-width="0.9" fill="none"/><circle cx="11.5" cy="11.5" r="4.8" fill="url(#gw)" stroke="#0a0a0a" stroke-width="1.4"/></svg>
<svg style="position:absolute;left:64px;top:348px" width="20" height="20" viewBox="0 0 20 20"><rect x="0.6" y="0.6" width="18.8" height="18.8" rx="4" fill="url(#bg)" stroke="#2e332e" stroke-width="1.15"/><path d="M5.84 17.16 A8 8 0 0 1 17.16 5.84" stroke="#d8707e" stroke-width="0.9" fill="none"/><path d="M7.05 15.95 A6.3 6.3 0 0 1 15.95 7.05" stroke="#d8707e" stroke-width="0.9" fill="none"/><path d="M8 8.5 V14.5 Q11.5 17.5 15 14.5 V8.5Z" fill="url(#gw)" stroke="#0a0a0a" stroke-width="1.2"/><ellipse cx="11.5" cy="8.5" rx="3.5" ry="1.5" fill="#f4f4f4" stroke="#0a0a0a" stroke-width="1"/></svg>
<svg style="position:absolute;left:92px;top:348px" width="20" height="20" viewBox="0 0 20 20"><rect x="0.6" y="0.6" width="18.8" height="18.8" rx="4" fill="url(#bg)" stroke="#2e332e" stroke-width="1.15"/><path d="M5.84 17.16 A8 8 0 0 1 17.16 5.84" stroke="#d8707e" stroke-width="0.9" fill="none"/><path d="M7.05 15.95 A6.3 6.3 0 0 1 15.95 7.05" stroke="#d8707e" stroke-width="0.9" fill="none"/><rect x="7" y="7" width="9" height="9" fill="url(#gw)" stroke="#0a0a0a" stroke-width="1.4"/></svg>
<svg style="position:absolute;left:120px;top:348px" width="20" height="20" viewBox="0 0 20 20"><rect x="0.6" y="0.6" width="18.8" height="18.8" rx="4" fill="url(#bg)" stroke="#2e332e" stroke-width="1.15"/><path d="M5.84 17.16 A8 8 0 0 1 17.16 5.84" stroke="#d8707e" stroke-width="0.9" fill="none"/><path d="M7.05 15.95 A6.3 6.3 0 0 1 15.95 7.05" stroke="#d8707e" stroke-width="0.9" fill="none"/><ellipse cx="11.5" cy="11.5" rx="6" ry="3" transform="rotate(45 11.5 11.5)" fill="url(#gw)" stroke="#0a0a0a" stroke-width="1.3"/></svg>
<svg style="position:absolute;left:36px;top:374px" width="20" height="20" viewBox="0 0 20 20"><rect x="0.6" y="0.6" width="18.8" height="18.8" rx="4" fill="url(#bg)" stroke="#2e332e" stroke-width="1.15"/><path d="M5.84 17.16 A8 8 0 0 1 17.16 5.84" stroke="#d8707e" stroke-width="0.9" fill="none"/><path d="M7.05 15.95 A6.3 6.3 0 0 1 15.95 7.05" stroke="#d8707e" stroke-width="0.9" fill="none"/><path d="M6.5 9 L11 6.5 L16 8.5 V14 L11.5 16.5 L6.5 14Z" fill="url(#gw)" stroke="#0a0a0a" stroke-width="1.2"/><path d="M11.5 11 V16.5 L16 14 V8.5Z" fill="#888" opacity="0.7"/></svg>
<div class="t d" style="left:45px;top:405.89px;font-size:11px;color:#111;">Lamp:</div>
<svg style="position:absolute;left:36px;top:419px" width="20" height="20" viewBox="0 0 20 20"><rect x="0.6" y="0.6" width="18.8" height="18.8" rx="4" fill="url(#bg)" stroke="#2e332e" stroke-width="1.15"/><path d="M7.5 7.5 L3.5 3.5 M3.5 7 V3.5 H7 M12.5 7.5 L16.5 3.5 M13 3.5 H16.5 V7 M7.5 12.5 L3.5 16.5 M3.5 13 V16.5 H7 M12.5 12.5 L16.5 16.5 M16.5 13 V16.5 H13" stroke="#2e2e1e" stroke-width="2.6" fill="none" stroke-linecap="round" stroke-linejoin="round"/><path d="M7.5 7.5 L3.5 3.5 M3.5 7 V3.5 H7 M12.5 7.5 L16.5 3.5 M13 3.5 H16.5 V7 M7.5 12.5 L3.5 16.5 M3.5 13 V16.5 H7 M12.5 12.5 L16.5 16.5 M16.5 13 V16.5 H13" stroke="#f2eeb4" stroke-width="1.3" fill="none" stroke-linecap="round" stroke-linejoin="round"/><circle cx="10" cy="10" r="4" fill="#f4e860" opacity="0.6"/><circle cx="10" cy="10" r="2.4" fill="#fff" stroke="#2a2a10" stroke-width="0.9"/></svg>
<svg style="position:absolute;left:64px;top:419px" width="20" height="20" viewBox="0 0 20 20"><rect x="0.6" y="0.6" width="18.8" height="18.8" rx="4" fill="url(#bg)" stroke="#2e332e" stroke-width="1.15"/><path d="M14.80 10.00 L17.00 10.00 M13.39 13.39 L14.95 14.95 M10.00 14.80 L10.00 17.00 M6.61 13.39 L5.05 14.95 M5.20 10.00 L3.00 10.00 M6.61 6.61 L5.05 5.05 M10.00 5.20 L10.00 3.00 M13.39 6.61 L14.95 5.05" stroke="#2e2e1e" stroke-width="2.4" fill="none" stroke-linecap="round" stroke-linejoin="round"/><path d="M14.80 10.00 L17.00 10.00 M13.39 13.39 L14.95 14.95 M10.00 14.80 L10.00 17.00 M6.61 13.39 L5.05 14.95 M5.20 10.00 L3.00 10.00 M6.61 6.61 L5.05 5.05 M10.00 5.20 L10.00 3.00 M13.39 6.61 L14.95 5.05" stroke="#f2eeb4" stroke-width="1.1" fill="none" stroke-linecap="round" stroke-linejoin="round"/><circle cx="10" cy="10" r="4" fill="#f4e030" stroke="#4a3a00" stroke-width="1"/><circle cx="9" cy="9" r="1.5" fill="#fffbd0"/></svg>
<svg style="position:absolute;left:92px;top:419px" width="20" height="20" viewBox="0 0 20 20"><rect x="0.6" y="0.6" width="18.8" height="18.8" rx="4" fill="url(#bg)" stroke="#2e332e" stroke-width="1.15"/><path d="M10.5 6.5 L14 3 Q17 2.5 17 6 L13.5 9.5Z" fill="#6a6a6a" stroke="#111" stroke-width="1"/><ellipse cx="9.5" cy="10.5" rx="2.6" ry="4.6" transform="rotate(45 9.5 10.5)" fill="#f4ea70" stroke="#3a3010" stroke-width="0.9"/><path d="M8 12 L4 16 M4 12.5 V16 H7.5" stroke="#2e2e1e" stroke-width="2.4" fill="none" stroke-linecap="round" stroke-linejoin="round"/><path d="M8 12 L4 16 M4 12.5 V16 H7.5" stroke="#f2eeb4" stroke-width="1.1" fill="none" stroke-linecap="round" stroke-linejoin="round"/></svg>
<svg style="position:absolute;left:120px;top:419px" width="20" height="20" viewBox="0 0 20 20"><rect x="0.6" y="0.6" width="18.8" height="18.8" rx="4" fill="url(#bg)" stroke="#2e332e" stroke-width="1.15"/><path d="M4.5 3.5 Q16 3.5 16.5 15.5" stroke="#2e2e1e" stroke-width="2.8" fill="none" stroke-linecap="round" stroke-linejoin="round"/><path d="M4.5 3.5 Q16 3.5 16.5 15.5" stroke="#f2eeb4" stroke-width="1.4" fill="none" stroke-linecap="round" stroke-linejoin="round"/><path d="M11 9 L4 16 M4 12 V16 H8" stroke="#2e2e1e" stroke-width="2.4" fill="none" stroke-linecap="round" stroke-linejoin="round"/><path d="M11 9 L4 16 M4 12 V16 H8" stroke="#f2eeb4" stroke-width="1.1" fill="none" stroke-linecap="round" stroke-linejoin="round"/></svg>
<svg style="position:absolute;left:36px;top:445px" width="20" height="20" viewBox="0 0 20 20"><rect x="0.6" y="0.6" width="18.8" height="18.8" rx="4" fill="url(#bg)" stroke="#2e332e" stroke-width="1.15"/><path d="M4 5 H12.5 M6.5 2.8 L4 5 L6.5 7.2 M8 10 L15 4.5 M4.5 15.5 L11.5 9.5 M15.5 9 V16 M13.3 13.8 L15.5 16 L17.7 13.8 M4 11 V16 H9" stroke="#2e2e1e" stroke-width="2.4" fill="none" stroke-linecap="round" stroke-linejoin="round"/><path d="M4 5 H12.5 M6.5 2.8 L4 5 L6.5 7.2 M8 10 L15 4.5 M4.5 15.5 L11.5 9.5 M15.5 9 V16 M13.3 13.8 L15.5 16 L17.7 13.8 M4 11 V16 H9" stroke="#f2eeb4" stroke-width="1.1" fill="none" stroke-linecap="round" stroke-linejoin="round"/></svg>
<div style="left:36px;top:481px;width:123px;height:20px;background:linear-gradient(#3a4c68,#27364e);border:1px solid #1a2230;border-radius:5px;"></div>
<svg style="position:absolute;left:40px;top:484px;" width="16" height="15" viewBox="0 0 16 15"><path d="M8 2 V8 L3 13 M8 8 L13 13" stroke="#8a4a10" stroke-width="3" fill="none" stroke-linecap="round"/><path d="M8 2 V8 L3 13 M8 8 L13 13" stroke="#f39a2a" stroke-width="1.6" fill="none" stroke-linecap="round"/></svg>
<div class="t" style="left:60.5px;top:486.54px;font-size:12px;color:#f0f0f0;letter-spacing:-0.53px">Group Instance</div>
<svg style="position:absolute;left:150px;top:484px;" width="8" height="14" viewBox="0 0 8 14"><path d="M1 5.5 L4 1.5 L7 5.5Z M1 8.5 L4 12.5 L7 8.5Z" fill="#a9b6c8"/></svg>
<div style="left:28px;top:509px;width:139px;height:23px;background:#4c5b72;"></div>
<svg style="position:absolute;left:40px;top:516px;" width="10" height="9" viewBox="0 0 10 9"><path d="M0.5 0.5 H9.5 L5 8.5Z" fill="#6cc2d8"/></svg>
<div class="t" style="left:53px;top:516.12px;font-size:12.5px;color:#7fd0e4;">Add Misc</div>
<svg style="position:absolute;left:146px;top:520px;" width="11" height="5" viewBox="0 0 11 5"><rect x="0" y="0" width="1" height="1" fill="#c4ccd8"/><rect x="0" y="1" width="1" height="1" fill="#050608"/><rect x="0" y="3" width="1" height="1" fill="#c4ccd8"/><rect x="0" y="4" width="1" height="1" fill="#050608"/><rect x="3" y="0" width="1" height="1" fill="#c4ccd8"/><rect x="3" y="1" width="1" height="1" fill="#050608"/><rect x="3" y="3" width="1" height="1" fill="#c4ccd8"/><rect x="3" y="4" width="1" height="1" fill="#050608"/><rect x="6" y="0" width="1" height="1" fill="#c4ccd8"/><rect x="6" y="1" width="1" height="1" fill="#050608"/><rect x="6" y="3" width="1" height="1" fill="#c4ccd8"/><rect x="6" y="4" width="1" height="1" fill="#050608"/><rect x="9" y="0" width="1" height="1" fill="#c4ccd8"/><rect x="9" y="1" width="1" height="1" fill="#050608"/><rect x="9" y="3" width="1" height="1" fill="#c4ccd8"/><rect x="9" y="4" width="1" height="1" fill="#050608"/></svg>
<div class="t d" style="left:45px;top:547.39px;font-size:11px;color:#111;">Other:</div>
<svg style="position:absolute;left:36px;top:561px" width="20" height="20" viewBox="0 0 20 20"><rect x="0.6" y="0.6" width="18.8" height="18.8" rx="4" fill="url(#bg)" stroke="#2e332e" stroke-width="1.15"/><path d="M5 4 H15 V7.5 H13.5 L13 5.8 H8.8 V9.3 H11.5 L12 8.2 H13 V12 H12 L11.5 10.8 H8.8 V14.2 L10.5 14.6 V16 H5 V14.6 L6.3 14.2 V5.8 L5 5.4Z" fill="#f7a845" stroke="#4a2806" stroke-width="0.9"/></svg>
<svg style="position:absolute;left:64px;top:561px" width="20" height="20" viewBox="0 0 20 20"><rect x="0.6" y="0.6" width="18.8" height="18.8" rx="4" fill="url(#bg)" stroke="#2e332e" stroke-width="1.15"/><path d="M4 8 H16 M10 7 V11 L6.5 16 M10 11 L13.5 16" stroke="#5a3008" stroke-width="2.6" fill="none" stroke-linecap="round"/><path d="M4 8 H16 M10 7 V11 L6.5 16 M10 11 L13.5 16" stroke="#f7a845" stroke-width="1.3" fill="none" stroke-linecap="round"/><circle cx="10" cy="4.6" r="1.9" fill="#f7a845" stroke="#4a2806" stroke-width="0.9"/></svg>
<svg style="position:absolute;left:92px;top:561px" width="20" height="20" viewBox="0 0 20 20"><rect x="0.6" y="0.6" width="18.8" height="18.8" rx="4" fill="url(#bg)" stroke="#2e332e" stroke-width="1.15"/><path d="M5 4.5 H15.5 V16 H5Z M5 10.2 H15.5 M10.2 4.5 V16" stroke="#4a2806" stroke-width="2.4" fill="none"/><path d="M5 4.5 H15.5 V16 H5Z M5 10.2 H15.5 M10.2 4.5 V16" stroke="#f7a845" stroke-width="1.1" fill="none"/><rect x="4.4" y="3.9" width="1.2" height="1.2" fill="#fff"/><rect x="4.4" y="9.6" width="1.2" height="1.2" fill="#fff"/><rect x="4.4" y="15.4" width="1.2" height="1.2" fill="#fff"/><rect x="9.6" y="3.9" width="1.2" height="1.2" fill="#fff"/><rect x="9.6" y="9.6" width="1.2" height="1.2" fill="#fff"/><rect x="9.6" y="15.4" width="1.2" height="1.2" fill="#fff"/><rect x="14.9" y="3.9" width="1.2" height="1.2" fill="#fff"/><rect x="14.9" y="9.6" width="1.2" height="1.2" fill="#fff"/><rect x="14.9" y="15.4" width="1.2" height="1.2" fill="#fff"/></svg>
<svg style="position:absolute;left:120px;top:561px" width="20" height="20" viewBox="0 0 20 20"><rect x="0.6" y="0.6" width="18.8" height="18.8" rx="4" fill="url(#bg)" stroke="#2e332e" stroke-width="1.15"/><circle cx="7" cy="6.8" r="3.3" fill="#f7a845" stroke="#4a2806" stroke-width="1"/><circle cx="12.8" cy="6.8" r="3.3" fill="#f7a845" stroke="#4a2806" stroke-width="1"/><circle cx="7" cy="6.8" r="1" fill="#2a1404"/><circle cx="12.8" cy="6.8" r="1" fill="#2a1404"/><path d="M6.5 10.5 H12 V15.5 H6.5Z" fill="#f7a845" stroke="#4a2806" stroke-width="0.9"/><path d="M4 12.3 H6.5 V13.7 H4Z M12 12.3 H15 L17 10.8 V15.2 L15 13.7 H12Z" fill="#f7a845" stroke="#4a2806" stroke-width="0.8"/></svg>
<svg style="position:absolute;left:36px;top:587px" width="20" height="20" viewBox="0 0 20 20"><rect x="0.6" y="0.6" width="18.8" height="18.8" rx="4" fill="url(#bg)" stroke="#2e332e" stroke-width="1.15"/><path d="M3.5 7.5 H6.5 L10.5 4 V16 L6.5 12.5 H3.5Z" fill="#f7a845" stroke="#4a2806" stroke-width="0.9"/><rect x="3.5" y="7.5" width="3" height="5" fill="#ffe0b0" stroke="#4a2806" stroke-width="0.6"/><path d="M12.5 7.5 Q14 10 12.5 12.5 M14.5 5 Q17.5 10 14.5 15" stroke="#5a3008" stroke-width="2.4" fill="none" stroke-linecap="round"/><path d="M12.5 7.5 Q14 10 12.5 12.5 M14.5 5 Q17.5 10 14.5 15" stroke="#f7a845" stroke-width="1.2" fill="none" stroke-linecap="round"/></svg>
<div class="t d" style="left:45px;top:618.39px;font-size:11px;color:#111;">Empties:</div>
<svg style="position:absolute;left:36px;top:632px" width="20" height="20" viewBox="0 0 20 20"><rect x="0.6" y="0.6" width="18.8" height="18.8" rx="4" fill="url(#bg)" stroke="#2e332e" stroke-width="1.15"/><path d="M10 3.5 V10.5 L4.5 15.5 M10 10.5 L15.5 15.5" stroke="#5a3008" stroke-width="3" fill="none" stroke-linecap="round"/><path d="M10 3.5 V10.5 L4.5 15.5 M10 10.5 L15.5 15.5" stroke="#f7a845" stroke-width="1.6" fill="none" stroke-linecap="round"/></svg>
<svg style="position:absolute;left:64px;top:632px" width="20" height="20" viewBox="0 0 20 20"><rect x="0.6" y="0.6" width="18.8" height="18.8" rx="4" fill="url(#bg)" stroke="#2e332e" stroke-width="1.15"/><circle cx="10" cy="10" r="5.8" fill="#c8bb88" stroke="#333" stroke-width="1"/><path d="M4.5 10 H15.5 M10 4.5 V15.5" stroke="#333" stroke-width="0.8"/><circle cx="10" cy="10" r="1.6" fill="#f7a845" stroke="#5a1808" stroke-width="0.7"/></svg>
<svg style="position:absolute;left:92px;top:632px" width="20" height="20" viewBox="0 0 20 20"><rect x="0.6" y="0.6" width="18.8" height="18.8" rx="4" fill="url(#bg)" stroke="#2e332e" stroke-width="1.15"/><circle cx="10" cy="10" r="6" fill="#eee" stroke="#555" stroke-width="1"/><circle cx="10" cy="10" r="4.4" fill="none" stroke="#d09050" stroke-width="1.2"/><circle cx="10" cy="10" r="1.5" fill="#f7a845" stroke="#5a1808" stroke-width="0.7"/></svg>
<svg style="position:absolute;left:120px;top:632px" width="20" height="20" viewBox="0 0 20 20"><rect x="0.6" y="0.6" width="18.8" height="18.8" rx="4" fill="url(#bg)" stroke="#2e332e" stroke-width="1.15"/><path d="M10 3 L16 15.5 Q10 17.5 4 15.5Z" fill="#f7a845" stroke="#222" stroke-width="0.9"/><path d="M10 3 L4 15.5 Q6 16.5 8.5 16.8Z" fill="#f4f4f4"/><circle cx="10.5" cy="11" r="1.5" fill="#f7a845" stroke="#5a1808" stroke-width="0.7"/></svg>
<svg style="position:absolute;left:36px;top:658px" width="20" height="20" viewBox="0 0 20 20"><rect x="0.6" y="0.6" width="18.8" height="18.8" rx="4" fill="url(#bg)" stroke="#2e332e" stroke-width="1.15"/><path d="M4.5 6.5 L10 4 L15.5 6.5 V13.5 L10 16.5 L4.5 13.5Z" fill="#f7a845" stroke="#333" stroke-width="1"/><path d="M4.5 6.5 L10 9 L15.5 6.5 L10 4Z" fill="#ddd"/><circle cx="10" cy="11" r="1.4" fill="#a05010" stroke="#5a1808" stroke-width="0.7"/></svg>
<svg style="position:absolute;left:64px;top:658px" width="20" height="20" viewBox="0 0 20 20"><rect x="0.6" y="0.6" width="18.8" height="18.8" rx="4" fill="url(#bg)" stroke="#2e332e" stroke-width="1.15"/><path d="M10 14 V5 M7 8 L10 5 L13 8" stroke="#5a3008" stroke-width="2.6" fill="none" stroke-linecap="round"/><path d="M10 14 V5 M7 8 L10 5 L13 8" stroke="#f7a845" stroke-width="1.4" fill="none" stroke-linecap="round"/><circle cx="10" cy="14.5" r="1.4" fill="#f7a845" stroke="#5a1808" stroke-width="0.7"/></svg>
<svg style="position:absolute;left:92px;top:658px" width="20" height="20" viewBox="0 0 20 20"><rect x="0.6" y="0.6" width="18.8" height="18.8" rx="4" fill="url(#bg)" stroke="#2e332e" stroke-width="1.15"/><path d="M10 13 V4.5 M7.5 7 L10 4.5 L12.5 7" stroke="#5a3008" stroke-width="2.4" fill="none" stroke-linecap="round"/><path d="M10 13 V4.5 M7.5 7 L10 4.5 L12.5 7" stroke="#f7a845" stroke-width="1.2" fill="none" stroke-linecap="round"/><rect x="4" y="12" width="4.5" height="4" fill="#f7a845" stroke="#333" stroke-width="0.6"/><rect x="11.5" y="12" width="4.5" height="4" fill="#eee" stroke="#333" stroke-width="0.6"/><circle cx="10" cy="12" r="1.3" fill="#f7a845" stroke="#5a1808" stroke-width="0.7"/></svg>
<svg style="position:absolute;left:120px;top:658px" width="20" height="20" viewBox="0 0 20 20"><rect x="0.6" y="0.6" width="18.8" height="18.8" rx="4" fill="url(#bg)" stroke="#2e332e" stroke-width="1.15"/><path d="M4 4 H13 L16 7 V16 H4Z" fill="#f8f4ec" stroke="#111" stroke-width="1"/><path d="M4.5 12 Q10 9.5 15.5 12 V15.5 H4.5Z" fill="#3a2a18"/><path d="M4.5 11.5 Q10 9 15.5 11.5 V12.8 Q10 10.5 4.5 12.8Z" fill="#f7a845"/><path d="M10 5 V9" stroke="#f7a845" stroke-width="1.4"/><circle cx="10" cy="10" r="1.4" fill="#f7a845" stroke="#5a1808" stroke-width="0.7"/></svg>
<div class="t d" style="left:45px;top:689.89px;font-size:11px;color:#111;">Force Field:</div>
<svg style="position:absolute;left:36px;top:703.5px" width="20" height="20" viewBox="0 0 20 20"><rect x="0.6" y="0.6" width="18.8" height="18.8" rx="4" fill="url(#bg)" stroke="#2e332e" stroke-width="1.15"/><path d="M5.5 5.5 Q7 3.8 9 5 Q11 6.2 12.5 4.5 Q14 3.5 15.5 4.8 M4.5 9 Q6 7.3 8 8.5 Q10 9.7 11.5 8 M9 13.5 Q10.5 11.8 12.5 13 Q14 14 15.5 12.5" stroke="#1c1c1c" stroke-width="2.4" fill="none" stroke-linecap="round" stroke-linejoin="round"/><path d="M5.5 5.5 Q7 3.8 9 5 Q11 6.2 12.5 4.5 Q14 3.5 15.5 4.8 M4.5 9 Q6 7.3 8 8.5 Q10 9.7 11.5 8 M9 13.5 Q10.5 11.8 12.5 13 Q14 14 15.5 12.5" stroke="#f6f6f6" stroke-width="1.1" fill="none" stroke-linecap="round" stroke-linejoin="round"/><circle cx="5" cy="14.5" r="2.1" fill="#f0502a" stroke="#3a0a00" stroke-width="0.9"/><circle cx="4.37" cy="13.87" r="0.73" fill="#ffb090"/></svg>
<svg style="position:absolute;left:64px;top:703.5px" width="20" height="20" viewBox="0 0 20 20"><rect x="0.6" y="0.6" width="18.8" height="18.8" rx="4" fill="url(#bg)" stroke="#2e332e" stroke-width="1.15"/><circle cx="13.5" cy="6" r="3.5" fill="url(#gw)" stroke="#111" stroke-width="1"/><path d="M11.6 6 H15.4" stroke="#111" stroke-width="1.2"/><circle cx="6.5" cy="13.5" r="3.6" fill="#f0502a" stroke="#3a0a00" stroke-width="1"/><path d="M4.5 13.5 H8.5 M6.5 11.5 V15.5" stroke="#111" stroke-width="1.3"/></svg>
<svg style="position:absolute;left:92px;top:703.5px" width="20" height="20" viewBox="0 0 20 20"><rect x="0.6" y="0.6" width="18.8" height="18.8" rx="4" fill="url(#bg)" stroke="#2e332e" stroke-width="1.15"/><path d="M9 4.5 Q15 3.5 15 8.5 Q15 12 11 13" stroke="#3a2a20" stroke-width="3" fill="none" stroke-linecap="round"/><path d="M9 4.5 Q15 3.5 15 8.5 Q15 12 11 13" stroke="#dca08a" stroke-width="1.8" fill="none" stroke-linecap="round"/><circle cx="6" cy="14.5" r="2.8" fill="url(#gw)" stroke="#111" stroke-width="0.9"/></svg>
<svg style="position:absolute;left:120px;top:703.5px" width="20" height="20" viewBox="0 0 20 20"><rect x="0.6" y="0.6" width="18.8" height="18.8" rx="4" fill="url(#bg)" stroke="#2e332e" stroke-width="1.15"/><path d="M6 10 Q5 3.5 11 3.5 Q17 3.5 16.5 10 Q15 12 13 10.5 Q11 12.5 9 10.5 Q7 12 6 10Z" fill="url(#gw)" stroke="#111" stroke-width="1"/><path d="M6 10 L5.5 15 M9 10.5 L5.5 15 M13 10.5 L5.5 15" stroke="#222" stroke-width="0.8"/><circle cx="5.5" cy="15" r="2" fill="#f0502a" stroke="#3a0a00" stroke-width="0.9"/><circle cx="4.90" cy="14.40" r="0.70" fill="#ffb090"/></svg>
<svg style="position:absolute;left:36px;top:729.5px" width="20" height="20" viewBox="0 0 20 20"><rect x="0.6" y="0.6" width="18.8" height="18.8" rx="4" fill="url(#bg)" stroke="#2e332e" stroke-width="1.15"/><path d="M15.97 10.60 A6 6 0 0 1 14.78 13.63 M13.80 14.65 A6 6 0 0 1 10.81 15.95 M9.40 15.97 A6 6 0 0 1 6.37 14.78 M5.35 13.80 A6 6 0 0 1 4.05 10.81 M4.03 9.40 A6 6 0 0 1 5.22 6.37 M6.20 5.35 A6 6 0 0 1 9.19 4.05 M10.60 4.03 A6 6 0 0 1 13.63 5.22 M14.65 6.20 A6 6 0 0 1 15.95 9.19" stroke="#1c1c1c" stroke-width="2.4" fill="none" stroke-linecap="round" stroke-linejoin="round"/><path d="M15.97 10.60 A6 6 0 0 1 14.78 13.63 M13.80 14.65 A6 6 0 0 1 10.81 15.95 M9.40 15.97 A6 6 0 0 1 6.37 14.78 M5.35 13.80 A6 6 0 0 1 4.05 10.81 M4.03 9.40 A6 6 0 0 1 5.22 6.37 M6.20 5.35 A6 6 0 0 1 9.19 4.05 M10.60 4.03 A6 6 0 0 1 13.63 5.22 M14.65 6.20 A6 6 0 0 1 15.95 9.19" stroke="#f6f6f6" stroke-width="1.2" fill="none" stroke-linecap="round" stroke-linejoin="round"/><circle cx="10" cy="10" r="2.5" fill="#f0502a" stroke="#3a0a00" stroke-width="0.9"/><circle cx="9.25" cy="9.25" r="0.88" fill="#ffb090"/></svg>
<svg style="position:absolute;left:64px;top:729.5px" width="20" height="20" viewBox="0 0 20 20"><rect x="0.6" y="0.6" width="18.8" height="18.8" rx="4" fill="url(#bg)" stroke="#2e332e" stroke-width="1.15"/><path d="M8.5 12 L14.5 4.5" stroke="#222" stroke-width="1.6"/><path d="M8.5 12 L14.5 4.5" stroke="#f06040" stroke-width="0.8"/><circle cx="5.5" cy="8" r="2.5" fill="url(#gw)" stroke="#111" stroke-width="0.9"/><circle cx="7.5" cy="12.5" r="2.5" fill="url(#gw)" stroke="#111" stroke-width="0.9"/><circle cx="11" cy="15" r="2.6" fill="url(#gw)" stroke="#111" stroke-width="0.9"/><circle cx="14.8" cy="4.8" r="1.7" fill="#f0502a" stroke="#3a0a00" stroke-width="0.9"/><circle cx="14.29" cy="4.29" r="0.59" fill="#ffb090"/></svg>
<svg style="position:absolute;left:92px;top:729.5px" width="20" height="20" viewBox="0 0 20 20"><rect x="0.6" y="0.6" width="18.8" height="18.8" rx="4" fill="url(#bg)" stroke="#2e332e" stroke-width="1.15"/><circle cx="8" cy="5.5" r="2.2" fill="url(#gw)" stroke="#111" stroke-width="0.9"/><circle cx="5" cy="14" r="2.6" fill="url(#gw)" stroke="#111" stroke-width="0.9"/><circle cx="14.5" cy="12.5" r="2.6" fill="url(#gw)" stroke="#111" stroke-width="0.9"/><circle cx="10" cy="9.5" r="3.6" fill="#f0502a" stroke="#3a0a00" stroke-width="0.9"/><circle cx="8.92" cy="8.42" r="1.26" fill="#ffb090"/></svg>
<svg style="position:absolute;left:120px;top:729.5px" width="20" height="20" viewBox="0 0 20 20"><rect x="0.6" y="0.6" width="18.8" height="18.8" rx="4" fill="url(#bg)" stroke="#2e332e" stroke-width="1.15"/><path d="M7.5 7 Q3.5 8 3.8 11 Q4.5 14.5 10 14.5 Q16 14.5 16.3 10.5 Q16.3 7 12.5 6.5" stroke="#1c1c1c" stroke-width="2.4" fill="none"/><path d="M7.5 7 Q3.5 8 3.8 11 Q4.5 14.5 10 14.5 Q16 14.5 16.3 10.5 Q16.3 7 12.5 6.5" stroke="#f4f4f4" stroke-width="1.2" fill="none"/><path d="M10 3 V17.5" stroke="#3a0a00" stroke-width="3"/><path d="M10 3 V17.5" stroke="#f0502a" stroke-width="1.6"/></svg>
<svg style="position:absolute;left:36px;top:755.5px" width="20" height="20" viewBox="0 0 20 20"><rect x="0.6" y="0.6" width="18.8" height="18.8" rx="4" fill="url(#bg)" stroke="#2e332e" stroke-width="1.15"/><circle cx="6" cy="5.5" r="2.2" fill="#d8d8d8" stroke="#777" stroke-width="0.6"/><circle cx="8.5" cy="4" r="1.8" fill="#e4e4e4" stroke="#777" stroke-width="0.6"/><path d="M4 10 Q4 16 9 16 Q13 16 14 12 L16.5 10 V8.5 L13 10.5 Q10 12.5 8 10Z" fill="#e8542a" stroke="#3a0a00" stroke-width="0.9"/><path d="M4.5 10 H8" stroke="#3a0a00" stroke-width="1"/></svg>
<svg style="position:absolute;left:64px;top:755.5px" width="20" height="20" viewBox="0 0 20 20"><rect x="0.6" y="0.6" width="18.8" height="18.8" rx="4" fill="url(#bg)" stroke="#2e332e" stroke-width="1.15"/><rect x="4.0" y="4.0" width="2.4" height="2.4" fill="#3a3a3a"/><rect x="4.0" y="6.4" width="2.4" height="2.4" fill="#f4f4f4"/><rect x="4.0" y="8.8" width="2.4" height="2.4" fill="#3a3a3a"/><rect x="4.0" y="11.2" width="2.4" height="2.4" fill="#f4f4f4"/><rect x="4.0" y="13.6" width="2.4" height="2.4" fill="#3a3a3a"/><rect x="6.4" y="4.0" width="2.4" height="2.4" fill="#f4f4f4"/><rect x="6.4" y="6.4" width="2.4" height="2.4" fill="#3a3a3a"/><rect x="6.4" y="8.8" width="2.4" height="2.4" fill="#f4f4f4"/><rect x="6.4" y="11.2" width="2.4" height="2.4" fill="#3a3a3a"/><rect x="6.4" y="13.6" width="2.4" height="2.4" fill="#f4f4f4"/><rect x="8.8" y="4.0" width="2.4" height="2.4" fill="#3a3a3a"/><rect x="8.8" y="6.4" width="2.4" height="2.4" fill="#f4f4f4"/><rect x="8.8" y="8.8" width="2.4" height="2.4" fill="#3a3a3a"/><rect x="8.8" y="11.2" width="2.4" height="2.4" fill="#f4f4f4"/><rect x="8.8" y="13.6" width="2.4" height="2.4" fill="#3a3a3a"/><rect x="11.2" y="4.0" width="2.4" height="2.4" fill="#f4f4f4"/><rect x="11.2" y="6.4" width="2.4" height="2.4" fill="#3a3a3a"/><rect x="11.2" y="8.8" width="2.4" height="2.4" fill="#f4f4f4"/><rect x="11.2" y="11.2" width="2.4" height="2.4" fill="#3a3a3a"/><rect x="11.2" y="13.6" width="2.4" height="2.4" fill="#f4f4f4"/><rect x="13.6" y="4.0" width="2.4" height="2.4" fill="#3a3a3a"/><rect x="13.6" y="6.4" width="2.4" height="2.4" fill="#f4f4f4"/><rect x="13.6" y="8.8" width="2.4" height="2.4" fill="#3a3a3a"/><rect x="13.6" y="11.2" width="2.4" height="2.4" fill="#f4f4f4"/><rect x="13.6" y="13.6" width="2.4" height="2.4" fill="#3a3a3a"/><circle cx="14.5" cy="14.5" r="2.5" fill="#f0502a" stroke="#3a0a00" stroke-width="0.9"/><circle cx="13.75" cy="13.75" r="0.88" fill="#ffb090"/></svg>
<svg style="position:absolute;left:92px;top:755.5px" width="20" height="20" viewBox="0 0 20 20"><rect x="0.6" y="0.6" width="18.8" height="18.8" rx="4" fill="url(#bg)" stroke="#2e332e" stroke-width="1.15"/><path d="M4.5 15 Q3.5 11 6.5 9 Q9 7 8 3.5 M7.5 16 Q7 12.5 10 11 Q12.5 9.5 12 4.5 M11 16.5 Q11 13.5 14 12.5 Q16 11 16 6" stroke="#1c1c1c" stroke-width="2.2" fill="none" stroke-linecap="round" stroke-linejoin="round"/><path d="M4.5 15 Q3.5 11 6.5 9 Q9 7 8 3.5 M7.5 16 Q7 12.5 10 11 Q12.5 9.5 12 4.5 M11 16.5 Q11 13.5 14 12.5 Q16 11 16 6" stroke="#f6f6f6" stroke-width="1" fill="none" stroke-linecap="round" stroke-linejoin="round"/><circle cx="14.5" cy="15" r="1.9" fill="#f0502a" stroke="#3a0a00" stroke-width="0.9"/><circle cx="13.93" cy="14.43" r="0.66" fill="#ffb090"/></svg>
<svg style="position:absolute;left:120px;top:755.5px" width="20" height="20" viewBox="0 0 20 20"><rect x="0.6" y="0.6" width="18.8" height="18.8" rx="4" fill="url(#bg)" stroke="#2e332e" stroke-width="1.15"/><path d="M10 4 A6 6 0 1 1 4 10 M10 6.5 A3.7 3.7 0 1 1 6.3 10.3" stroke="#1c1c1c" stroke-width="2.4" fill="none" stroke-linecap="round" stroke-linejoin="round"/><path d="M10 4 A6 6 0 1 1 4 10 M10 6.5 A3.7 3.7 0 1 1 6.3 10.3" stroke="#f6f6f6" stroke-width="1.1" fill="none" stroke-linecap="round" stroke-linejoin="round"/><circle cx="10.2" cy="10" r="1.8" fill="#f0502a" stroke="#3a0a00" stroke-width="0.9"/><circle cx="9.66" cy="9.46" r="0.63" fill="#ffb090"/></svg>
<svg style="position:absolute;left:36px;top:781.5px" width="20" height="20" viewBox="0 0 20 20"><rect x="0.6" y="0.6" width="18.8" height="18.8" rx="4" fill="url(#bg)" stroke="#2e332e" stroke-width="1.15"/><path d="M6 4.5 L16.5 7 V13 L6 15.5Z" fill="#f6f6f6" stroke="#111" stroke-width="1"/><path d="M9.5 5.3 V14.7 M13.5 6.2 V13.8" stroke="#e8502a" stroke-width="2"/><ellipse cx="6" cy="10" rx="2.2" ry="5.5" fill="#f6f6f6" stroke="#111" stroke-width="1"/><ellipse cx="6" cy="10" rx="0.9" ry="3.5" fill="#222"/><path d="M4.5 15 V18 M6.5 15.5 V18" stroke="#222" stroke-width="0.8"/></svg>
<svg style="position:absolute;left:273px;top:129px" width="20" height="20" viewBox="0 0 20 20"><rect x="0.6" y="0.6" width="18.8" height="18.8" rx="4" fill="url(#bg)" stroke="#2e332e" stroke-width="1.15"/><path d="M9.5 4.5 A5.8 5.8 0 1 1 8 16.3" stroke="#163a66" stroke-width="3.6" fill="none"/><path d="M9.5 4.5 A5.8 5.8 0 1 1 8 16.3" stroke="#3aa0ee" stroke-width="2.2" fill="none"/><path d="M3 6 L10 3.5 L8 11.5Z" fill="#c6f2fb" stroke="#2a5a7a" stroke-width="0.8"/></svg>
<svg style="position:absolute;left:301px;top:129px" width="20" height="20" viewBox="0 0 20 20"><rect x="0.6" y="0.6" width="18.8" height="18.8" rx="4" fill="url(#bg)" stroke="#2e332e" stroke-width="1.15"/><path d="M10.5 4.5 A5.8 5.8 0 1 0 12 16.3" stroke="#163a66" stroke-width="3.6" fill="none"/><path d="M10.5 4.5 A5.8 5.8 0 1 0 12 16.3" stroke="#3aa0ee" stroke-width="2.2" fill="none"/><path d="M17 6 L10 3.5 L12 11.5Z" fill="#c6f2fb" stroke="#2a5a7a" stroke-width="0.8"/></svg>
<svg style="position:absolute;left:329px;top:129px" width="20" height="20" viewBox="0 0 20 20"><rect x="0.6" y="0.6" width="18.8" height="18.8" rx="4" fill="url(#bg)" stroke="#2e332e" stroke-width="1.15"/><path d="M10 4 A4.6 4.6 0 1 1 9 13" stroke="#163a66" stroke-width="3" fill="none"/><path d="M10 4 A4.6 4.6 0 1 1 9 13" stroke="#3aa0ee" stroke-width="1.8" fill="none"/><path d="M5 5 L10.5 3 L9 9.5Z" fill="#c6f2fb" stroke="#2a5a7a" stroke-width="0.7"/><rect x="3.5" y="14.5" width="13" height="2.4" fill="#f5a030" stroke="#6a3a10" stroke-width="0.6"/></svg>
<div class="t d" style="left:282px;top:160.39px;font-size:11px;color:#111;">Repeat:</div>
<svg style="position:absolute;left:273px;top:174px" width="20" height="20" viewBox="0 0 20 20"><rect x="0.6" y="0.6" width="18.8" height="18.8" rx="4" fill="url(#bg)" stroke="#2e332e" stroke-width="1.15"/><path d="M8 6.5 H16 V11" stroke="#163a66" stroke-width="2" fill="none"/><path d="M3.5 6.5 L8.5 3.8 V9.2Z" fill="#3aa0ee" stroke="#163a66" stroke-width="0.6"/><path d="M4.5 10 V14 H12" stroke="#3a6a6a" stroke-width="1.2" fill="none"/><path d="M16.5 14 L11.5 11.3 V16.7Z" fill="#c6f2fb" stroke="#2a5a7a" stroke-width="0.6"/></svg>
<svg style="position:absolute;left:301px;top:174px" width="20" height="20" viewBox="0 0 20 20"><rect x="0.6" y="0.6" width="18.8" height="18.8" rx="4" fill="url(#bg)" stroke="#2e332e" stroke-width="1.15"/><path d="M10.5 4 A4.6 4.6 0 1 0 11 13" stroke="#163a66" stroke-width="3" fill="none"/><path d="M10.5 4 A4.6 4.6 0 1 0 11 13" stroke="#3aa0ee" stroke-width="1.8" fill="none"/><path d="M15.5 5 L10 3 L11.5 9.5Z" fill="#c6f2fb" stroke="#2a5a7a" stroke-width="0.7"/><rect x="4" y="14.3" width="2.6" height="2.6" fill="#c6f2fb" stroke="#163a66" stroke-width="0.9"/><rect x="8.7" y="14.3" width="2.6" height="2.6" fill="#c6f2fb" stroke="#163a66" stroke-width="0.9"/><rect x="13.4" y="14.3" width="2.6" height="2.6" fill="#c6f2fb" stroke="#163a66" stroke-width="0.9"/></svg>
<svg style="position:absolute;left:167px;top:57px;overflow:hidden" width="77" height="772" viewBox="0 0 77 772"><g stroke="#9cbce6" stroke-width="1" opacity="0.75"><line x1="-253.20" y1="337.60" x2="146.80" y2="252.80"/><line x1="-253.20" y1="337.60" x2="-70.80" y2="518.40"/><line x1="-241.80" y1="348.90" x2="158.20" y2="264.10"/><line x1="-228.20" y1="332.30" x2="-45.80" y2="513.10"/><line x1="-230.40" y1="360.20" x2="169.60" y2="275.40"/><line x1="-203.20" y1="327.00" x2="-20.80" y2="507.80"/><line x1="-219.00" y1="371.50" x2="181.00" y2="286.70"/><line x1="-178.20" y1="321.70" x2="4.20" y2="502.50"/><line x1="-207.60" y1="382.80" x2="192.40" y2="298.00"/><line x1="-153.20" y1="316.40" x2="29.20" y2="497.20"/><line x1="-196.20" y1="394.10" x2="203.80" y2="309.30"/><line x1="-128.20" y1="311.10" x2="54.20" y2="491.90"/><line x1="-184.80" y1="405.40" x2="215.20" y2="320.60"/><line x1="-103.20" y1="305.80" x2="79.20" y2="486.60"/><line x1="-173.40" y1="416.70" x2="226.60" y2="331.90"/><line x1="-78.20" y1="300.50" x2="104.20" y2="481.30"/><line x1="-150.60" y1="439.30" x2="249.40" y2="354.50"/><line x1="-28.20" y1="289.90" x2="154.20" y2="470.70"/><line x1="-139.20" y1="450.60" x2="260.80" y2="365.80"/><line x1="-3.20" y1="284.60" x2="179.20" y2="465.40"/><line x1="-127.80" y1="461.90" x2="272.20" y2="377.10"/><line x1="21.80" y1="279.30" x2="204.20" y2="460.10"/><line x1="-116.40" y1="473.20" x2="283.60" y2="388.40"/><line x1="46.80" y1="274.00" x2="229.20" y2="454.80"/><line x1="-105.00" y1="484.50" x2="295.00" y2="399.70"/><line x1="71.80" y1="268.70" x2="254.20" y2="449.50"/><line x1="-93.60" y1="495.80" x2="306.40" y2="411.00"/><line x1="96.80" y1="263.40" x2="279.20" y2="444.20"/><line x1="-82.20" y1="507.10" x2="317.80" y2="422.30"/><line x1="121.80" y1="258.10" x2="304.20" y2="438.90"/><line x1="-70.80" y1="518.40" x2="329.20" y2="433.60"/><line x1="146.80" y1="252.80" x2="329.20" y2="433.60"/></g><line x1="-162.00" y1="428.00" x2="238.00" y2="343.20" stroke="#3fc63f" stroke-width="1"/><line x1="-53.20" y1="295.20" x2="129.20" y2="476.00" stroke="#c84a5a" stroke-width="1"/></svg>
<svg style="position:absolute;left:404px;top:57px;overflow:hidden" width="243" height="772" viewBox="0 0 243 772"><g stroke="#9cbce6" stroke-width="1" opacity="0.75"><line x1="120.74" y1="323.50" x2="649.94" y2="211.31"/><line x1="120.74" y1="323.50" x2="362.06" y2="562.69"/><line x1="135.82" y1="338.45" x2="665.02" y2="226.26"/><line x1="153.82" y1="316.48" x2="395.13" y2="555.68"/><line x1="150.91" y1="353.40" x2="680.11" y2="241.21"/><line x1="186.89" y1="309.47" x2="428.21" y2="548.67"/><line x1="165.99" y1="368.35" x2="695.19" y2="256.16"/><line x1="219.97" y1="302.46" x2="461.28" y2="541.66"/><line x1="181.07" y1="383.30" x2="710.27" y2="271.11"/><line x1="253.04" y1="295.45" x2="494.36" y2="534.65"/><line x1="196.15" y1="398.25" x2="725.35" y2="286.06"/><line x1="286.12" y1="288.44" x2="527.43" y2="527.63"/><line x1="211.24" y1="413.20" x2="740.44" y2="301.00"/><line x1="319.19" y1="281.42" x2="560.51" y2="520.62"/><line x1="226.32" y1="428.15" x2="755.52" y2="315.95"/><line x1="352.27" y1="274.41" x2="593.58" y2="513.61"/><line x1="256.48" y1="458.05" x2="785.68" y2="345.85"/><line x1="418.42" y1="260.39" x2="659.73" y2="499.59"/><line x1="271.56" y1="473.00" x2="800.76" y2="360.80"/><line x1="451.49" y1="253.38" x2="692.81" y2="492.58"/><line x1="286.65" y1="487.94" x2="815.85" y2="375.75"/><line x1="484.57" y1="246.37" x2="725.88" y2="485.56"/><line x1="301.73" y1="502.89" x2="830.93" y2="390.70"/><line x1="517.64" y1="239.35" x2="758.96" y2="478.55"/><line x1="316.81" y1="517.84" x2="846.01" y2="405.65"/><line x1="550.72" y1="232.34" x2="792.03" y2="471.54"/><line x1="331.89" y1="532.79" x2="861.09" y2="420.60"/><line x1="583.79" y1="225.33" x2="825.11" y2="464.53"/><line x1="346.98" y1="547.74" x2="876.18" y2="435.55"/><line x1="616.87" y1="218.32" x2="858.18" y2="457.52"/><line x1="362.06" y1="562.69" x2="891.26" y2="450.50"/><line x1="649.94" y1="211.31" x2="891.26" y2="450.50"/></g><line x1="241.40" y1="443.10" x2="770.60" y2="330.90" stroke="#3fc63f" stroke-width="1"/><line x1="385.34" y1="267.40" x2="626.66" y2="506.60" stroke="#c84a5a" stroke-width="1"/></svg>
<svg style="position:absolute;left:180px;top:418px;" width="50" height="50" viewBox="0 0 50 50"><path d="M25.1 6.2 V20.5 M25.1 30.5 V45.6 M5 25.3 H19.8 M30.2 25.3 H44.8" stroke="#000" stroke-width="1.5"/><circle cx="25.1" cy="25.3" r="9.4" fill="none" stroke="#fff" stroke-width="1.5"/><circle cx="25.1" cy="25.3" r="9.4" fill="none" stroke="#f01818" stroke-width="1.5" stroke-dasharray="4.92 4.92"/></svg>
<svg style="position:absolute;left:185px;top:768px;" width="45" height="50" viewBox="0 0 45 50"><path d="M8 34.2 V13" stroke="#0a0af0" stroke-width="1.6"/><path d="M8 34.2 L30.7 29.7" stroke="#10d010" stroke-width="1.6"/><path d="M8 34.2 L17.7 44.5" stroke="#e01010" stroke-width="1.6"/><text x="10.5" y="11.5" font-size="10" fill="#2020f0" stroke="#2020f0" stroke-width="0.3" font-family="Liberation Sans">z</text><text x="33" y="29" font-size="10" fill="#20c020" stroke="#20c020" stroke-width="0.3" font-family="Liberation Sans">y</text><text x="20.5" y="44" font-size="10" fill="#e02020" stroke="#e02020" stroke-width="0.3" font-family="Liberation Sans">x</text></svg>
<div style="left:0;top:0;width:647px;height:890px;clip-path:inset(57px 403px 61px 167px)">
<div class="t" style="left:237px;top:810.24px;font-size:10px;color:#e8e8e8;">(1)</div>
</div>
<svg style="position:absolute;left:425px;top:768px;" width="45" height="50" viewBox="0 0 45 50"><path d="M8 34.2 V13" stroke="#0a0af0" stroke-width="1.6"/><path d="M8 34.2 L30.7 29.7" stroke="#10d010" stroke-width="1.6"/><path d="M8 34.2 L17.7 44.5" stroke="#e01010" stroke-width="1.6"/></svg>
<div class="t" style="left:477px;top:810.24px;font-size:10px;color:#e8e8e8;">(1)</div>
<svg style="position:absolute;left:231px;top:57px;" width="13" height="13" viewBox="0 0 13 13"><path d="M1 0 L13 12 M5 0 L13 8 M9 0 L13 4" stroke="#c8ccd0" stroke-width="1" opacity="0.75"/></svg>
<div style="left:229px;top:80px;width:12px;height:13px;background:#2f353c;border-radius:4px;"></div>
<svg style="position:absolute;left:230px;top:81px;" width="10" height="10" viewBox="0 0 10 10"><path d="M5 2 V8.5 M1.8 5.2 H8.2" stroke="#8a9096" stroke-width="1.9"/></svg>
<div style="left:131px;top:815px;width:14px;height:14px;background:#4b5159;border-radius:4px 4px 0 0;"></div>
<svg style="position:absolute;left:133px;top:817px;" width="10" height="10" viewBox="0 0 10 10"><path d="M5 1.5 V8.5 M1.5 5 H8.5" stroke="#b4b8bc" stroke-width="2"/></svg>
<div style="left:0;top:0;width:647px;height:890px;clip-path:inset(829px 403px 35px 8px)">
<div style="left:210px;top:832px;width:40px;height:20px;background:linear-gradient(#3a4c68,#27364e);border:1px solid #1a2230;border-radius:5px;"></div>
<svg style="position:absolute;left:214px;top:834px;" width="16" height="16" viewBox="0 0 16 16"><path d="M2 4.5 L8 1.5 L14 4.5 V11.5 L8 14.5 L2 11.5Z" fill="#f0a040" stroke="#3a2008" stroke-width="1"/><path d="M2 4.5 L8 7.5 L14 4.5 L8 1.5Z" fill="#ffd9a0"/><path d="M8 7.5 V14.5 L14 11.5 V4.5Z" fill="#d07820"/></svg>
<div class="t" style="left:233px;top:837.99px;font-size:11px;color:#f0f0f0;">Ob</div>
</div>
<div style="left:244px;top:829px;width:1px;height:26px;background:#0d0f12;"></div>
<div style="left:254px;top:832px;width:31px;height:20px;background:linear-gradient(#3a4c68,#27364e);border:1px solid #1a2230;border-radius:5px;"></div>
<svg style="position:absolute;left:258px;top:834px;" width="16" height="16" viewBox="0 0 16 16"><path d="M2 4.5 L8 1.5 L14 4.5 V11.5 L8 14.5 L2 11.5Z" fill="#ddd" stroke="#111" stroke-width="1"/><path d="M2 4.5 L8 7.5 L14 4.5 L8 1.5Z" fill="#fff"/><path d="M8 7.5 V14.5 L14 11.5 V4.5Z" fill="#888"/></svg>
<svg style="position:absolute;left:275px;top:835px;" width="8" height="14" viewBox="0 0 8 14"><path d="M1 5.5 L4 1.5 L7 5.5Z M1 8.5 L4 12.5 L7 8.5Z" fill="#a9b6c8"/></svg>
<div style="left:481px;top:832px;width:113px;height:21px;background:linear-gradient(#3a4c68,#27364e);border:1px solid #1a2230;border-radius:5px;"></div>
<svg style="position:absolute;left:486px;top:835px;" width="16" height="16" viewBox="0 0 16 16"><path d="M2 4.5 L8 1.5 L14 4.5 V11.5 L8 14.5 L2 11.5Z" fill="#f0a040" stroke="#3a2008" stroke-width="1"/><path d="M2 4.5 L8 7.5 L14 4.5 L8 1.5Z" fill="#ffd9a0"/><path d="M8 7.5 V14.5 L14 11.5 V4.5Z" fill="#d07820"/></svg>
<div class="t" style="left:505px;top:838.39px;font-size:11px;color:#f0f0f0;">Object Mode</div>
<svg style="position:absolute;left:584px;top:836px;" width="8" height="14" viewBox="0 0 8 14"><path d="M1 5.5 L4 1.5 L7 5.5Z M1 8.5 L4 12.5 L7 8.5Z" fill="#a9b6c8"/></svg>
<div style="left:599px;top:832px;width:35px;height:21px;background:linear-gradient(#3a4c68,#27364e);border:1px solid #1a2230;border-radius:5px;"></div>
<svg style="position:absolute;left:602px;top:835px;" width="16" height="16" viewBox="0 0 16 16"><defs><radialGradient id="sph" cx="0.35" cy="0.35" r="0.7"><stop offset="0" stop-color="#fff"/><stop offset="1" stop-color="#888"/></radialGradient></defs><circle cx="8" cy="8" r="6" fill="url(#sph)" stroke="#222" stroke-width="0.8"/></svg>
<svg style="position:absolute;left:622px;top:836px;" width="8" height="14" viewBox="0 0 8 14"><path d="M1 5.5 L4 1.5 L7 5.5Z M1 8.5 L4 12.5 L7 8.5Z" fill="#a9b6c8"/></svg>
<div style="left:639px;top:832px;width:20px;height:21px;background:linear-gradient(#3a4c68,#27364e);border:1px solid #1a2230;border-radius:5px;"></div>
<svg style="position:absolute;left:641px;top:835px;" width="8" height="16" viewBox="0 0 8 16"><circle cx="8" cy="8" r="6" fill="url(#sph)" stroke="#222" stroke-width="0.8"/></svg>
<div style="left:330px;top:319px;width:257px;height:516px;background:rgba(0,0,0,0.3);border-radius:8px;filter:blur(4.5px);"></div>
<div style="left:332px;top:314px;width:253px;height:519px;border:1px solid rgba(255,255,255,0.07);border-radius:7px 7px 0 0;"></div>
<div style="left:334px;top:316px;width:249px;height:515px;background:rgba(34,35,37,0.97);border-radius:5px 5px 0 0;"></div>
<div class="t" style="left:364px;top:328.19px;font-size:11px;color:#f2f2f2;"><span class="u">S</span>cale</div>
<div class="t" style="right:72px;top:328.19px;font-size:11px;color:#f2f2f2;">R</div>
<div class="t" style="left:364px;top:348.19px;font-size:11px;color:#f2f2f2;">Rotate</div>
<div class="t" style="right:72px;top:348.19px;font-size:11px;color:#f2f2f2;">E</div>
<div class="t" style="left:364px;top:367.89px;font-size:11px;color:#f2f2f2;">Translate</div>
<div class="t" style="right:72px;top:367.89px;font-size:11px;color:#f2f2f2;">W</div>
<div style="left:334px;top:387px;width:249px;height:1px;background:#3d3f42;"></div>
<div class="t" style="left:364px;top:397.39px;font-size:11px;color:#f2f2f2;">Playback <span class="u">A</span>nimation</div>
<div style="left:334px;top:416px;width:249px;height:1px;background:#3d3f42;"></div>
<div class="t" style="left:364px;top:426.69px;font-size:11px;color:#f2f2f2;"><span class="u">W</span>alk Navigation</div>
<div class="t" style="left:364px;top:446.79px;font-size:11px;color:#f2f2f2;"><span class="u">F</span>ly Navigation</div>
<div style="left:334px;top:465px;width:249px;height:1px;background:#3d3f42;"></div>
<div class="t" style="left:364px;top:475.39px;font-size:11px;color:#f2f2f2;">Cen<span class="u">t</span>er View to Mouse</div>
<div class="t" style="right:72px;top:475.39px;font-size:11px;color:#f2f2f2;">Alt F</div>
<div class="t" style="left:364px;top:495.39px;font-size:11px;color:#f2f2f2;">Dolly <span class="u">V</span>iew</div>
<div class="t" style="right:72px;top:495.39px;font-size:11px;color:#f2f2f2;">Shift Ctrl Middle Mouse</div>
<div class="t" style="left:364px;top:515.39px;font-size:11px;color:#858585;">Zoom <span class="u">C</span>amera 1:1</div>
<div class="t" style="right:72px;top:515.39px;font-size:11px;color:#858585;">Shift Numpad Enter</div>
<div class="t" style="left:364px;top:535.39px;font-size:11px;color:#f2f2f2;">Zoo<span class="u">m</span> Out</div>
<div class="t" style="right:72px;top:535.39px;font-size:11px;color:#f2f2f2;">Numpad -</div>
<div class="t" style="left:364px;top:555.39px;font-size:11px;color:#f2f2f2;"><span class="u">Z</span>oom In</div>
<div class="t" style="right:72px;top:555.39px;font-size:11px;color:#f2f2f2;">Numpad +</div>
<div style="left:334px;top:574px;width:249px;height:1px;background:#3d3f42;"></div>
<div class="t" style="left:364px;top:584.59px;font-size:11px;color:#f2f2f2;">Pan Down</div>
<div class="t" style="right:72px;top:584.59px;font-size:11px;color:#f2f2f2;">Ctrl Numpad 2</div>
<div class="t" style="left:364px;top:606.19px;font-size:11px;color:#f2f2f2;">Pan Up</div>
<div class="t" style="right:72px;top:606.19px;font-size:11px;color:#f2f2f2;">Ctrl Numpad 8</div>
<div class="t" style="left:364px;top:628.49px;font-size:11px;color:#f2f2f2;">Pa<span class="u">n</span> Right</div>
<div class="t" style="right:72px;top:628.49px;font-size:11px;color:#f2f2f2;">Ctrl Numpad 6</div>
<div class="t" style="left:364px;top:650.59px;font-size:11px;color:#f2f2f2;"><span class="u">P</span>an Left</div>
<div class="t" style="right:72px;top:650.59px;font-size:11px;color:#f2f2f2;">Ctrl Numpad 4</div>
<div style="left:334px;top:669.5px;width:249px;height:1px;background:#3d3f42;"></div>
<div class="t" style="left:364px;top:679.59px;font-size:11px;color:#f2f2f2;">Roll Ri<span class="u">g</span>ht</div>
<div class="t" style="right:72px;top:679.59px;font-size:11px;color:#f2f2f2;">Shift Ctrl Numpad 6</div>
<div class="t" style="left:364px;top:699.39px;font-size:11px;color:#f2f2f2;">Roll <span class="u">L</span>eft</div>
<div class="t" style="right:72px;top:699.39px;font-size:11px;color:#f2f2f2;">Shift Ctrl Numpad 4</div>
<div style="left:334px;top:718px;width:249px;height:1px;background:#3d3f42;"></div>
<div class="t" style="left:364px;top:728.49px;font-size:11px;color:#f2f2f2;">Or<span class="u">b</span>it Opposite</div>
<div class="t" style="right:72px;top:728.49px;font-size:11px;color:#f2f2f2;">Numpad 9</div>
<div class="t" style="left:364px;top:748.39px;font-size:11px;color:#f2f2f2;">Orbit <span class="u">D</span>own</div>
<div class="t" style="right:72px;top:748.39px;font-size:11px;color:#f2f2f2;">Numpad 2</div>
<div class="t" style="left:364px;top:770.39px;font-size:11px;color:#f2f2f2;">Orbit <span class="u">U</span>p</div>
<div class="t" style="right:72px;top:770.39px;font-size:11px;color:#f2f2f2;">Numpad 8</div>
<div class="t" style="left:364px;top:792.39px;font-size:11px;color:#f2f2f2;">Orbit <span class="u">R</span>ight</div>
<div class="t" style="right:72px;top:792.39px;font-size:11px;color:#f2f2f2;">Numpad 6</div>
<div class="t" style="left:364px;top:814.39px;font-size:11px;color:#f2f2f2;"><span class="u">O</span>rbit Left</div>
<div class="t" style="right:72px;top:814.39px;font-size:11px;color:#f2f2f2;">Numpad 4</div>
<svg style="position:absolute;left:341px;top:324px;" width="16" height="14" viewBox="0 0 16 14"><path d="M3 3 L13 11 M13 3 L3 11" stroke="#b6e9ea" stroke-width="1.3"/><path d="M0.7 0.8 L6 1.6 L1.6 5.4Z M15.3 0.8 L10 1.6 L14.4 5.4Z M0.7 13.2 L6 12.4 L1.6 8.6Z M15.3 13.2 L10 12.4 L14.4 8.6Z" fill="#b6e9ea"/></svg>
<svg style="position:absolute;left:340px;top:343px;" width="18" height="16" viewBox="0 0 18 16"><path d="M5.2 3.6 A6.3 5.6 0 1 0 12.8 3.6" stroke="#b6e9ea" stroke-width="1.3" fill="none"/><path d="M8 1 L3 2.5 L6.5 6.5Z M10 1 L15 2.5 L11.5 6.5Z" fill="#b6e9ea"/></svg>
<svg style="position:absolute;left:341px;top:364px;" width="16" height="15" viewBox="0 0 16 15"><path d="M2.5 2.5 L13.5 12.5" stroke="#b6e9ea" stroke-width="1.3"/><path d="M0.8 0.6 L6.5 1.6 L1.6 6.2Z M15.2 14.4 L9.5 13.4 L14.4 8.8Z" fill="#b6e9ea"/></svg></body></html>
